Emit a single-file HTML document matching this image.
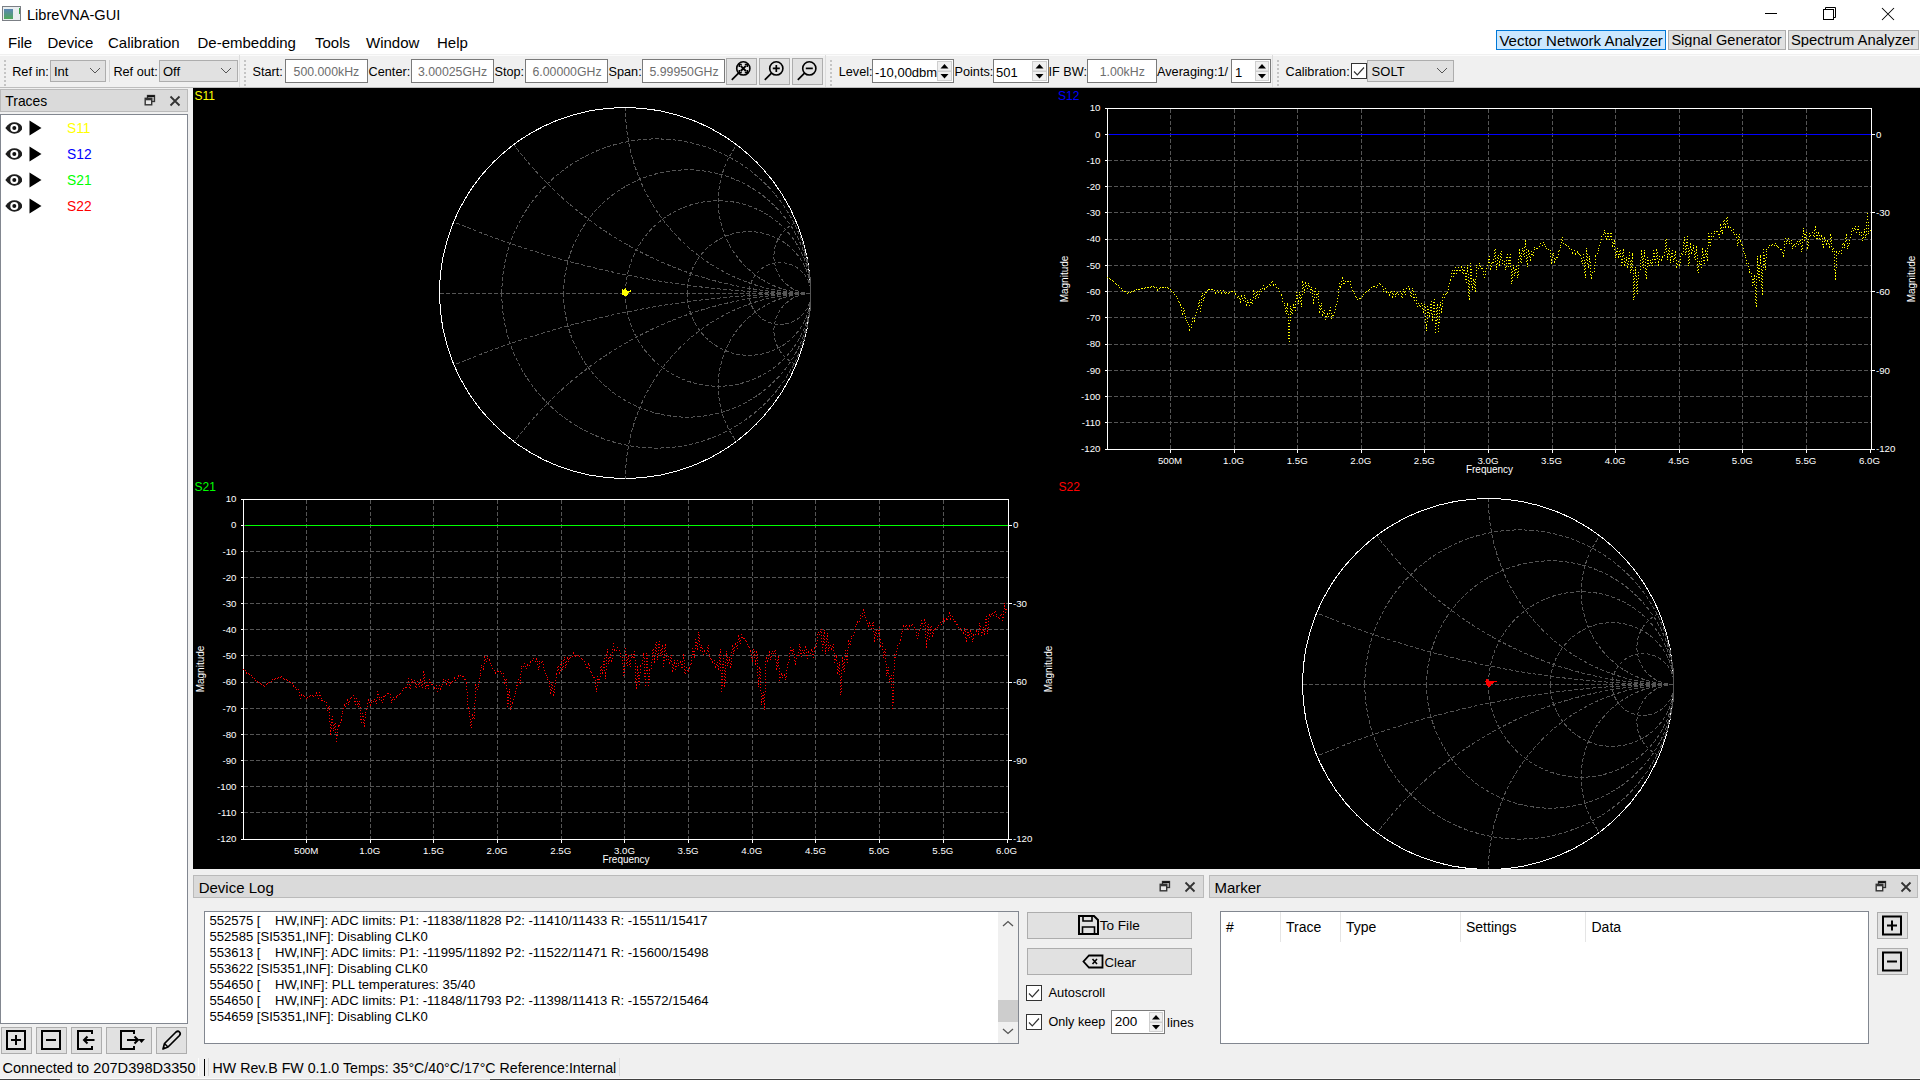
<!DOCTYPE html>
<html><head><meta charset="utf-8"><title>LibreVNA-GUI</title><style>
html,body{margin:0;padding:0;}
body{width:1920px;height:1080px;overflow:hidden;position:relative;background:#f0f0f0;font-family:"Liberation Sans", sans-serif;}
.t{position:absolute;white-space:pre;line-height:1;}
.r{position:absolute;}
</style></head>
<body>
<div class="r" style="left:0px;top:0px;width:1920px;height:54px;background:#ffffff;"></div><svg class="r" style="left:2px;top:6px" width="20" height="16"><defs><linearGradient id="ig" x1="0" y1="0" x2="0" y2="1"><stop offset="0" stop-color="#5b86b5"/><stop offset="1" stop-color="#4fa85a"/></linearGradient></defs><rect x="0.5" y="0.5" width="18" height="14" fill="#e9eef0" stroke="#7b7f85"/><rect x="2" y="3" width="9" height="10" fill="url(#ig)"/><rect x="17" y="2" width="1" height="6" fill="#3aa14a"/></svg><div class="t" style="left:27.00px;top:7.64px;font-size:14.6px;color:#000;">LibreVNA-GUI</div><div class="r" style="left:1765px;top:13px;width:12px;height:1px;background:#000;"></div><svg class="r" style="left:1820px;top:5px" width="20" height="18"><rect x="3.5" y="4.5" width="10" height="10" fill="none" stroke="#000"/><path d="M5.5,4.5 V2.5 H15.5 V12.5 H13.5" fill="none" stroke="#000"/></svg><svg class="r" style="left:1880px;top:6px" width="16" height="16"><path d="M2,2 L14,14 M14,2 L2,14" stroke="#000" stroke-width="1.05"/></svg><div class="t" style="left:8.00px;top:35.30px;font-size:15px;color:#000;">File</div><div class="t" style="left:47.50px;top:35.30px;font-size:15px;color:#000;">Device</div><div class="t" style="left:108.00px;top:35.30px;font-size:15px;color:#000;">Calibration</div><div class="t" style="left:197.50px;top:35.30px;font-size:15px;color:#000;">De-embedding</div><div class="t" style="left:315.00px;top:35.30px;font-size:15px;color:#000;">Tools</div><div class="t" style="left:366.00px;top:35.30px;font-size:15px;color:#000;">Window</div><div class="t" style="left:437.00px;top:35.30px;font-size:15px;color:#000;">Help</div><div class="r" style="left:1496px;top:30px;width:170px;height:20px;background:#cce8ff;box-sizing:border-box;border:1px solid #0078d7;"></div><div class="r" style="left:1668px;top:30px;width:118px;height:20px;background:#e1e1e1;box-sizing:border-box;border:1px solid #adadad;"></div><div class="r" style="left:1788px;top:30px;width:131px;height:20px;background:#e1e1e1;box-sizing:border-box;border:1px solid #adadad;"></div><div class="r" style="left:1496px;top:30px;width:424px;height:17px;overflow:hidden"><div class="t" style="left:3.40px;top:2.90px;font-size:15px;color:#000;">Vector Network Analyzer</div><div class="t" style="left:175.40px;top:3.24px;font-size:14.6px;color:#000;">Signal Generator</div><div class="t" style="left:295.00px;top:3.07px;font-size:14.8px;color:#000;">Spectrum Analyzer</div></div><div class="r" style="left:0px;top:55px;width:1920px;height:1px;background:#fbfbfb;"></div><div class="r" style="left:0px;top:87px;width:1920px;height:1px;background:#bdbdbd;"></div><div class="r" style="left:4px;top:59.5px;width:2px;height:2px;background:#c4c4c4"></div><div class="r" style="left:4px;top:63.5px;width:2px;height:2px;background:#c4c4c4"></div><div class="r" style="left:4px;top:67.5px;width:2px;height:2px;background:#c4c4c4"></div><div class="r" style="left:4px;top:71.5px;width:2px;height:2px;background:#c4c4c4"></div><div class="r" style="left:4px;top:75.5px;width:2px;height:2px;background:#c4c4c4"></div><div class="r" style="left:4px;top:79.5px;width:2px;height:2px;background:#c4c4c4"></div><div class="r" style="left:4px;top:83.5px;width:2px;height:2px;background:#c4c4c4"></div><div class="t" style="left:12.20px;top:66.35px;font-size:12.7px;color:#000;">Ref in:</div><div class="r" style="left:50px;top:60px;width:56px;height:22px;background:#e1e1e1;box-sizing:border-box;border:1px solid #adadad;"></div><div class="t" style="left:54.00px;top:64.90px;font-size:13px;color:#000;">Int</div><svg class="r" style="left:89px;top:67px" width="12" height="7"><path d="M1,1 L6.0,6 L11,1" fill="none" stroke="#444" stroke-width="0.9"/></svg><div class="r" style="left:109px;top:60px;width:1px;height:22px;background:#d4d4d4;"></div><div class="t" style="left:113.40px;top:66.35px;font-size:12.7px;color:#000;">Ref out:</div><div class="r" style="left:159px;top:60px;width:79px;height:22px;background:#e1e1e1;box-sizing:border-box;border:1px solid #adadad;"></div><div class="t" style="left:163.00px;top:64.90px;font-size:13px;color:#000;">Off</div><svg class="r" style="left:220px;top:67px" width="12" height="7"><path d="M1,1 L6.0,6 L11,1" fill="none" stroke="#444" stroke-width="0.9"/></svg><div class="r" style="left:239px;top:55px;width:1px;height:32px;background:#dcdcdc;"></div><div class="r" style="left:244px;top:59.5px;width:2px;height:2px;background:#c4c4c4"></div><div class="r" style="left:244px;top:63.5px;width:2px;height:2px;background:#c4c4c4"></div><div class="r" style="left:244px;top:67.5px;width:2px;height:2px;background:#c4c4c4"></div><div class="r" style="left:244px;top:71.5px;width:2px;height:2px;background:#c4c4c4"></div><div class="r" style="left:244px;top:75.5px;width:2px;height:2px;background:#c4c4c4"></div><div class="r" style="left:244px;top:79.5px;width:2px;height:2px;background:#c4c4c4"></div><div class="r" style="left:244px;top:83.5px;width:2px;height:2px;background:#c4c4c4"></div><div class="t" style="left:252.50px;top:66.35px;font-size:12.7px;color:#000;">Start:</div><div class="r" style="left:285px;top:59px;width:83px;height:24px;background:#fff;box-sizing:border-box;border:1px solid #7a7a7a;"></div><div class="t" style="left:293.60px;top:66.09px;font-size:12.3px;color:#6d6d6d;">500.000kHz</div><div class="t" style="left:368.60px;top:66.35px;font-size:12.7px;color:#000;">Center:</div><div class="r" style="left:411px;top:59px;width:83px;height:24px;background:#fff;box-sizing:border-box;border:1px solid #7a7a7a;"></div><div class="t" style="left:418.00px;top:66.09px;font-size:12.3px;color:#6d6d6d;">3.00025GHz</div><div class="t" style="left:494.50px;top:66.35px;font-size:12.7px;color:#000;">Stop:</div><div class="r" style="left:525px;top:59px;width:83px;height:24px;background:#fff;box-sizing:border-box;border:1px solid #7a7a7a;"></div><div class="t" style="left:532.50px;top:66.09px;font-size:12.3px;color:#6d6d6d;">6.00000GHz</div><div class="t" style="left:608.50px;top:66.35px;font-size:12.7px;color:#000;">Span:</div><div class="r" style="left:642px;top:59px;width:83px;height:24px;background:#fff;box-sizing:border-box;border:1px solid #7a7a7a;"></div><div class="t" style="left:649.50px;top:66.09px;font-size:12.3px;color:#6d6d6d;">5.99950GHz</div><div class="r" style="left:726px;top:58px;width:31px;height:27px;background:#e1e1e1;box-sizing:border-box;border:1px solid #adadad;"></div><svg class="r" style="left:0;top:0" width="1920" height="90"><g transform="translate(0,0)"><circle cx="743.3" cy="68.4" r="6.6" fill="none" stroke="#000" stroke-width="1.6"/><path d="M738.5,73.2 L731.8,79.9" stroke="#000" stroke-width="1.7"/><path d="M740.6999999999999,65.80000000000001 L745.9,71.0 M745.9,65.80000000000001 L740.6999999999999,71.0" stroke="#000" stroke-width="1.8"/><path d="M739.3,66.9 V64.4 H741.8 M744.8,64.4 H747.3 V66.9 M747.3,69.9 V72.4 H744.8 M741.8,72.4 H739.3 V69.9" fill="none" stroke="#000" stroke-width="1.5"/></g></svg><div class="r" style="left:759px;top:58px;width:31px;height:27px;background:#e1e1e1;box-sizing:border-box;border:1px solid #adadad;"></div><svg class="r" style="left:0;top:0" width="1920" height="90"><g transform="translate(0,0)"><circle cx="776.3" cy="68.4" r="6.6" fill="none" stroke="#000" stroke-width="1.6"/><path d="M771.5,73.2 L764.8,79.9" stroke="#000" stroke-width="1.7"/><path d="M772.8,68.4 H779.8 M776.3,64.9 V71.9" stroke="#000" stroke-width="1.7"/></g></svg><div class="r" style="left:792px;top:58px;width:31px;height:27px;background:#e1e1e1;box-sizing:border-box;border:1px solid #adadad;"></div><svg class="r" style="left:0;top:0" width="1920" height="90"><g transform="translate(0,0)"><circle cx="809.3" cy="68.4" r="6.6" fill="none" stroke="#000" stroke-width="1.6"/><path d="M804.5,73.2 L797.8,79.9" stroke="#000" stroke-width="1.7"/><path d="M805.8,68.4 H812.8" stroke="#000" stroke-width="1.7"/></g></svg><div class="r" style="left:825px;top:55px;width:1px;height:32px;background:#dcdcdc;"></div><div class="r" style="left:830px;top:59.5px;width:2px;height:2px;background:#c4c4c4"></div><div class="r" style="left:830px;top:63.5px;width:2px;height:2px;background:#c4c4c4"></div><div class="r" style="left:830px;top:67.5px;width:2px;height:2px;background:#c4c4c4"></div><div class="r" style="left:830px;top:71.5px;width:2px;height:2px;background:#c4c4c4"></div><div class="r" style="left:830px;top:75.5px;width:2px;height:2px;background:#c4c4c4"></div><div class="r" style="left:830px;top:79.5px;width:2px;height:2px;background:#c4c4c4"></div><div class="r" style="left:830px;top:83.5px;width:2px;height:2px;background:#c4c4c4"></div><div class="t" style="left:838.70px;top:66.35px;font-size:12.7px;color:#000;">Level:</div><div class="r" style="left:872px;top:59px;width:82px;height:24px;background:#fff;box-sizing:border-box;border:1px solid #7a7a7a;"></div><div class="t" style="left:875.00px;top:65.50px;font-size:13px;color:#000;">-10,00dbm</div><svg class="r" style="left:937px;top:61px" width="15" height="20"><rect x="0.5" y="0.5" width="14" height="9.5" fill="#f0f0f0" stroke="#cfcfcf"/><rect x="0.5" y="10.5" width="14" height="9.0" fill="#f0f0f0" stroke="#cfcfcf"/><path d="M3.5,7.5 L7.5,3.0 L11.5,7.5Z" fill="#000"/><path d="M3.5,13.0 L7.5,17.5 L11.5,13.0Z" fill="#000"/></svg><div class="t" style="left:954.50px;top:66.35px;font-size:12.7px;color:#000;">Points:</div><div class="r" style="left:993px;top:59px;width:56px;height:24px;background:#fff;box-sizing:border-box;border:1px solid #7a7a7a;"></div><div class="t" style="left:996.00px;top:65.50px;font-size:13px;color:#000;">501</div><svg class="r" style="left:1032px;top:61px" width="15" height="20"><rect x="0.5" y="0.5" width="14" height="9.5" fill="#f0f0f0" stroke="#cfcfcf"/><rect x="0.5" y="10.5" width="14" height="9.0" fill="#f0f0f0" stroke="#cfcfcf"/><path d="M3.5,7.5 L7.5,3.0 L11.5,7.5Z" fill="#000"/><path d="M3.5,13.0 L7.5,17.5 L11.5,13.0Z" fill="#000"/></svg><div class="t" style="left:1048.50px;top:66.35px;font-size:12.7px;color:#000;">IF BW:</div><div class="r" style="left:1087px;top:59px;width:70px;height:24px;background:#fff;box-sizing:border-box;border:1px solid #7a7a7a;"></div><div class="t" style="left:1099.70px;top:66.09px;font-size:12.3px;color:#6d6d6d;">1.00kHz</div><div class="t" style="left:1157.00px;top:66.35px;font-size:12.7px;color:#000;">Averaging:1/</div><div class="r" style="left:1231px;top:59px;width:40px;height:24px;background:#fff;box-sizing:border-box;border:1px solid #7a7a7a;"></div><div class="t" style="left:1235.00px;top:65.50px;font-size:13px;color:#000;">1</div><svg class="r" style="left:1255px;top:61px" width="14" height="20"><rect x="0.5" y="0.5" width="13" height="9.5" fill="#f0f0f0" stroke="#cfcfcf"/><rect x="0.5" y="10.5" width="13" height="9.0" fill="#f0f0f0" stroke="#cfcfcf"/><path d="M3.0,7.5 L7.0,3.0 L11.0,7.5Z" fill="#000"/><path d="M3.0,13.0 L7.0,17.5 L11.0,13.0Z" fill="#000"/></svg><div class="r" style="left:1272px;top:55px;width:1px;height:32px;background:#dcdcdc;"></div><div class="r" style="left:1277px;top:59.5px;width:2px;height:2px;background:#c4c4c4"></div><div class="r" style="left:1277px;top:63.5px;width:2px;height:2px;background:#c4c4c4"></div><div class="r" style="left:1277px;top:67.5px;width:2px;height:2px;background:#c4c4c4"></div><div class="r" style="left:1277px;top:71.5px;width:2px;height:2px;background:#c4c4c4"></div><div class="r" style="left:1277px;top:75.5px;width:2px;height:2px;background:#c4c4c4"></div><div class="r" style="left:1277px;top:79.5px;width:2px;height:2px;background:#c4c4c4"></div><div class="r" style="left:1277px;top:83.5px;width:2px;height:2px;background:#c4c4c4"></div><div class="t" style="left:1285.50px;top:66.35px;font-size:12.7px;color:#000;">Calibration:</div><svg class="r" style="left:1351px;top:63px" width="16" height="16"><rect x="0.5" y="0.5" width="15" height="15" fill="#fff" stroke="#333"/><path d="M3,8.5 L6.3,11.8 L13,4.5" fill="none" stroke="#333" stroke-width="1.2"/></svg><div class="r" style="left:1367px;top:60px;width:87px;height:22px;background:#e1e1e1;box-sizing:border-box;border:1px solid #adadad;"></div><div class="t" style="left:1371.60px;top:64.90px;font-size:13px;color:#000;">SOLT</div><svg class="r" style="left:1436px;top:67px" width="12" height="7"><path d="M1,1 L6.0,6 L11,1" fill="none" stroke="#444" stroke-width="0.9"/></svg><div class="r" style="left:0px;top:89px;width:188px;height:23px;background:#dadada;box-sizing:border-box;border:1px solid #bababa;"></div><div class="t" style="left:5.30px;top:95.03px;font-size:13.9px;color:#000;">Traces</div><svg class="r" style="left:143.5px;top:94.0px" width="12" height="12"><rect x="3.5" y="1.5" width="7" height="6" fill="#bbb" stroke="#333" stroke-width="1.3"/><rect x="1.2" y="4.3" width="6.5" height="6.5" fill="#e8e8e8" stroke="#333" stroke-width="1.4"/><path d="M1.5,5.5 H7.5" stroke="#333" stroke-width="1.6"/><path d="M3.5,2.2 H10.5" stroke="#111" stroke-width="1.6"/></svg><svg class="r" style="left:169px;top:94.5px" width="12" height="12"><path d="M1.5,1.5 L10.5,10.5 M10.5,1.5 L1.5,10.5" stroke="#333" stroke-width="1.8"/></svg><div class="r" style="left:0px;top:114px;width:188px;height:910px;background:#fff;box-sizing:border-box;border:1px solid #828790;"></div><svg class="r" style="left:5px;top:122.4px" width="18" height="12"><path d="M0.3,6 C3.5,2 6,0.3 9.3,0.3 C13,0.3 15.5,2.3 17,4.5 L17,7.5 C15.5,9.7 13,11.7 9.3,11.7 C6,11.7 3.5,10 0.3,6Z" fill="#1e1e1e"/><circle cx="9.3" cy="6" r="4" fill="#fff"/><circle cx="9.3" cy="6" r="2" fill="#111"/></svg><svg class="r" style="left:28.5px;top:120.4px" width="14" height="16"><path d="M0.5,0.5 L12.5,8 L0.5,15.5Z" fill="#000"/></svg><div class="t" style="left:67.00px;top:121.92px;font-size:13.8px;color:#ffff00;">S11</div><svg class="r" style="left:5px;top:148.4px" width="18" height="12"><path d="M0.3,6 C3.5,2 6,0.3 9.3,0.3 C13,0.3 15.5,2.3 17,4.5 L17,7.5 C15.5,9.7 13,11.7 9.3,11.7 C6,11.7 3.5,10 0.3,6Z" fill="#1e1e1e"/><circle cx="9.3" cy="6" r="4" fill="#fff"/><circle cx="9.3" cy="6" r="2" fill="#111"/></svg><svg class="r" style="left:28.5px;top:146.4px" width="14" height="16"><path d="M0.5,0.5 L12.5,8 L0.5,15.5Z" fill="#000"/></svg><div class="t" style="left:67.00px;top:147.92px;font-size:13.8px;color:#0000ff;">S12</div><svg class="r" style="left:5px;top:174.4px" width="18" height="12"><path d="M0.3,6 C3.5,2 6,0.3 9.3,0.3 C13,0.3 15.5,2.3 17,4.5 L17,7.5 C15.5,9.7 13,11.7 9.3,11.7 C6,11.7 3.5,10 0.3,6Z" fill="#1e1e1e"/><circle cx="9.3" cy="6" r="4" fill="#fff"/><circle cx="9.3" cy="6" r="2" fill="#111"/></svg><svg class="r" style="left:28.5px;top:172.4px" width="14" height="16"><path d="M0.5,0.5 L12.5,8 L0.5,15.5Z" fill="#000"/></svg><div class="t" style="left:67.00px;top:173.92px;font-size:13.8px;color:#00ff00;">S21</div><svg class="r" style="left:5px;top:200.4px" width="18" height="12"><path d="M0.3,6 C3.5,2 6,0.3 9.3,0.3 C13,0.3 15.5,2.3 17,4.5 L17,7.5 C15.5,9.7 13,11.7 9.3,11.7 C6,11.7 3.5,10 0.3,6Z" fill="#1e1e1e"/><circle cx="9.3" cy="6" r="4" fill="#fff"/><circle cx="9.3" cy="6" r="2" fill="#111"/></svg><svg class="r" style="left:28.5px;top:198.4px" width="14" height="16"><path d="M0.5,0.5 L12.5,8 L0.5,15.5Z" fill="#000"/></svg><div class="t" style="left:67.00px;top:199.92px;font-size:13.8px;color:#ff0000;">S22</div><div class="r" style="left:1px;top:1027px;width:31px;height:27px;background:#e1e1e1;box-sizing:border-box;border:1px solid #adadad;"></div><div class="r" style="left:36px;top:1027px;width:31px;height:27px;background:#e1e1e1;box-sizing:border-box;border:1px solid #adadad;"></div><div class="r" style="left:71px;top:1027px;width:31px;height:27px;background:#e1e1e1;box-sizing:border-box;border:1px solid #adadad;"></div><div class="r" style="left:106px;top:1027px;width:46px;height:27px;background:#e1e1e1;box-sizing:border-box;border:1px solid #adadad;"></div><div class="r" style="left:156px;top:1027px;width:31px;height:27px;background:#e1e1e1;box-sizing:border-box;border:1px solid #adadad;"></div><svg class="r" style="left:0;top:1020px" width="190" height="40"><rect x="7" y="11" width="18" height="18" fill="none" stroke="#000" stroke-width="2"/><path d="M11,20 H21 M16,15 V25" stroke="#000" stroke-width="2"/><rect x="42" y="11" width="18" height="18" fill="none" stroke="#000" stroke-width="2"/><path d="M46,20 H56" stroke="#000" stroke-width="2"/><path d="M92,14 V11 H78 V29 H92 V26" fill="none" stroke="#000" stroke-width="2"/><path d="M94.5,20 H84 M87.5,16.5 L84,20 L87.5,23.5" fill="none" stroke="#000" stroke-width="2"/><path d="M134,14 V11 H121 V29 H134 V26" fill="none" stroke="#000" stroke-width="2"/><path d="M127,20 H138 M134.5,16.5 L138,20 L134.5,23.5" fill="none" stroke="#000" stroke-width="2"/><path d="M138,19 H145 L141.5,23Z" fill="#000"/><path d="M163,29 L164.5,23.5 L176,12 Q178,10.5 179.5,12 Q181,13.5 179.5,15.5 L168,27Z" fill="none" stroke="#000" stroke-width="1.7" stroke-linejoin="round"/><path d="M164.5,23.5 L168,27" stroke="#000" stroke-width="1.5"/><path d="M163,29 L165.5,28.3 L163.7,26.5Z" fill="#000"/></svg><div class="r" style="left:193px;top:875px;width:1011px;height:23px;background:#dadada;box-sizing:border-box;border:1px solid #bababa;"></div><div class="t" style="left:198.70px;top:880.30px;font-size:15px;color:#000;">Device Log</div><svg class="r" style="left:1158.5px;top:880.0px" width="12" height="12"><rect x="3.5" y="1.5" width="7" height="6" fill="#bbb" stroke="#333" stroke-width="1.3"/><rect x="1.2" y="4.3" width="6.5" height="6.5" fill="#e8e8e8" stroke="#333" stroke-width="1.4"/><path d="M1.5,5.5 H7.5" stroke="#333" stroke-width="1.6"/><path d="M3.5,2.2 H10.5" stroke="#111" stroke-width="1.6"/></svg><svg class="r" style="left:1184px;top:880.5px" width="12" height="12"><path d="M1.5,1.5 L10.5,10.5 M10.5,1.5 L1.5,10.5" stroke="#333" stroke-width="1.8"/></svg><div class="r" style="left:204px;top:911px;width:815px;height:133px;background:#fff;box-sizing:border-box;border:1px solid #828790;"></div><div class="r" style="left:998px;top:912px;width:20px;height:131px;background:#f0f0f0;"></div><div class="r" style="left:998px;top:1000px;width:20px;height:22px;background:#cdcdcd;"></div><svg class="r" style="left:998px;top:912px" width="20" height="131"><path d="M5,14 L10,9.5 L15,14" fill="none" stroke="#555" stroke-width="1.3"/><path d="M5,117 L10,121.5 L15,117" fill="none" stroke="#555" stroke-width="1.3"/></svg><div class="t" style="left:209.50px;top:913.51px;font-size:13.1px;color:#000;white-space:pre;">552575 [    HW,INF]: ADC limits: P1: -11838/11828 P2: -11410/11433 R: -15511/15417</div><div class="t" style="left:209.50px;top:929.51px;font-size:13.1px;color:#000;white-space:pre;">552585 [SI5351,INF]: Disabling CLK0</div><div class="t" style="left:209.50px;top:945.51px;font-size:13.1px;color:#000;white-space:pre;">553613 [    HW,INF]: ADC limits: P1: -11995/11892 P2: -11522/11471 R: -15600/15498</div><div class="t" style="left:209.50px;top:961.51px;font-size:13.1px;color:#000;white-space:pre;">553622 [SI5351,INF]: Disabling CLK0</div><div class="t" style="left:209.50px;top:977.51px;font-size:13.1px;color:#000;white-space:pre;">554650 [    HW,INF]: PLL temperatures: 35/40</div><div class="t" style="left:209.50px;top:993.51px;font-size:13.1px;color:#000;white-space:pre;">554650 [    HW,INF]: ADC limits: P1: -11848/11793 P2: -11398/11413 R: -15572/15464</div><div class="t" style="left:209.50px;top:1009.51px;font-size:13.1px;color:#000;white-space:pre;">554659 [SI5351,INF]: Disabling CLK0</div><div class="r" style="left:1027px;top:912px;width:165px;height:27px;background:#e1e1e1;box-sizing:border-box;border:1px solid #adadad;"></div><div class="r" style="left:1027px;top:948px;width:165px;height:27px;background:#e1e1e1;box-sizing:border-box;border:1px solid #adadad;"></div><svg class="r" style="left:1070px;top:910px" width="40" height="70"><path d="M9,6 H24 L28,10 V24 H9Z" fill="none" stroke="#000" stroke-width="2"/><path d="M13,6 V11 H22 V6" fill="none" stroke="#000" stroke-width="1.6"/><path d="M12.5,24 V17 H24.5 V24" fill="none" stroke="#000" stroke-width="1.6"/><path d="M32.5,45.5 H19 L13.5,51.5 L19,57.5 H32.5Z" fill="none" stroke="#000" stroke-width="1.8" stroke-linejoin="miter"/><path d="M22.5,49 L27,54 M27,49 L22.5,54" stroke="#000" stroke-width="1.6"/></svg><div class="t" style="left:1099.70px;top:919.29px;font-size:13.6px;color:#000;">To File</div><div class="t" style="left:1104.50px;top:955.83px;font-size:13.2px;color:#000;">Clear</div><svg class="r" style="left:1026px;top:985px" width="16" height="16"><rect x="0.5" y="0.5" width="15" height="15" fill="#fff" stroke="#333"/><path d="M3,8.5 L6.3,11.8 L13,4.5" fill="none" stroke="#333" stroke-width="1.2"/></svg><div class="t" style="left:1048.50px;top:987.08px;font-size:12.9px;color:#000;">Autoscroll</div><svg class="r" style="left:1026px;top:1014px" width="16" height="16"><rect x="0.5" y="0.5" width="15" height="15" fill="#fff" stroke="#333"/><path d="M3,8.5 L6.3,11.8 L13,4.5" fill="none" stroke="#333" stroke-width="1.2"/></svg><div class="t" style="left:1048.50px;top:1016.03px;font-size:12.6px;color:#000;">Only keep</div><div class="r" style="left:1111px;top:1010px;width:54px;height:24px;background:#fff;box-sizing:border-box;border:1px solid #7a7a7a;"></div><div class="t" style="left:1114.70px;top:1015.27px;font-size:13.5px;color:#000;">200</div><svg class="r" style="left:1149px;top:1012px" width="14" height="20"><rect x="0.5" y="0.5" width="13" height="9.5" fill="#f0f0f0" stroke="#cfcfcf"/><rect x="0.5" y="10.5" width="13" height="9.0" fill="#f0f0f0" stroke="#cfcfcf"/><path d="M3.0,7.5 L7.0,3.0 L11.0,7.5Z" fill="#000"/><path d="M3.0,13.0 L7.0,17.5 L11.0,13.0Z" fill="#000"/></svg><div class="t" style="left:1167.00px;top:1015.70px;font-size:13px;color:#000;">lines</div><div class="r" style="left:1209px;top:875px;width:709px;height:23px;background:#dadada;box-sizing:border-box;border:1px solid #bababa;"></div><div class="t" style="left:1214.40px;top:880.20px;font-size:15px;color:#000;">Marker</div><svg class="r" style="left:1874.5px;top:880.0px" width="12" height="12"><rect x="3.5" y="1.5" width="7" height="6" fill="#bbb" stroke="#333" stroke-width="1.3"/><rect x="1.2" y="4.3" width="6.5" height="6.5" fill="#e8e8e8" stroke="#333" stroke-width="1.4"/><path d="M1.5,5.5 H7.5" stroke="#333" stroke-width="1.6"/><path d="M3.5,2.2 H10.5" stroke="#111" stroke-width="1.6"/></svg><svg class="r" style="left:1900px;top:880.5px" width="12" height="12"><path d="M1.5,1.5 L10.5,10.5 M10.5,1.5 L1.5,10.5" stroke="#333" stroke-width="1.8"/></svg><div class="r" style="left:1220px;top:911px;width:649px;height:133px;background:#fff;box-sizing:border-box;border:1px solid #828790;"></div><div class="r" style="left:1280px;top:912px;width:1px;height:30px;background:#e5e5e5;"></div><div class="r" style="left:1340px;top:912px;width:1px;height:30px;background:#e5e5e5;"></div><div class="r" style="left:1460px;top:912px;width:1px;height:30px;background:#e5e5e5;"></div><div class="r" style="left:1585px;top:912px;width:1px;height:30px;background:#e5e5e5;"></div><div class="t" style="left:1226.00px;top:920.25px;font-size:14px;color:#000;">#</div><div class="t" style="left:1286.00px;top:920.25px;font-size:14px;color:#000;">Trace</div><div class="t" style="left:1346.00px;top:920.25px;font-size:14px;color:#000;">Type</div><div class="t" style="left:1466.00px;top:920.25px;font-size:14px;color:#000;">Settings</div><div class="t" style="left:1591.50px;top:920.25px;font-size:14px;color:#000;">Data</div><div class="r" style="left:1877px;top:912px;width:31px;height:27px;background:#e1e1e1;box-sizing:border-box;border:1px solid #adadad;"></div><div class="r" style="left:1877px;top:948px;width:31px;height:27px;background:#e1e1e1;box-sizing:border-box;border:1px solid #adadad;"></div><svg class="r" style="left:1877px;top:912px" width="31" height="64"><rect x="6" y="4.5" width="18" height="18" fill="none" stroke="#000" stroke-width="2"/><path d="M10,13.5 H20 M15,8.5 V18.5" stroke="#000" stroke-width="2"/><rect x="6" y="40.5" width="18" height="18" fill="none" stroke="#000" stroke-width="2"/><path d="M10,49.5 H20" stroke="#000" stroke-width="2"/></svg><div class="t" style="left:2.40px;top:1060.64px;font-size:14.6px;color:#000;">Connected to 207D398D3350</div><div class="r" style="left:198px;top:1058px;width:1px;height:18px;background:#fdfdfd;"></div><div class="r" style="left:204px;top:1059px;width:1px;height:17px;background:#000;"></div><div class="r" style="left:208px;top:1058px;width:1px;height:18px;background:#dadada;"></div><div class="t" style="left:212.60px;top:1060.98px;font-size:14.2px;color:#000;">HW Rev.B FW 0.1.0 Temps: 35°C/40°C/17°C Reference:Internal</div><div class="r" style="left:619px;top:1058px;width:1px;height:18px;background:#dadada;"></div><div class="r" style="left:0px;top:1078px;width:1920px;height:1px;background:#f9f9f9;"></div><div class="r" style="left:0px;top:1079px;width:1920px;height:1px;background:#404040;"></div><div class="r" style="left:60px;top:1079px;width:430px;height:1px;background:#c8c8c8;"></div><div class="r" style="left:193px;top:88px;width:1727px;height:781px;background:#000000;"></div><svg class="r" style="left:0;top:0" width="1920" height="1080" shape-rendering="crispEdges"><defs><clipPath id="ga"><rect x="193" y="88" width="1727" height="781"/></clipPath></defs><g clip-path="url(#ga)"><circle cx="625.0" cy="293.0" r="185.5" fill="none" stroke="#ffffff" stroke-width="1"/><path d="M501.83333333333326,293.5 A154.58333333333334,154.58333333333334 0 1 0 811.0,293.5 A154.58333333333334,154.58333333333334 0 1 0 501.83333333333326,293.5 M563.6666666666667,293.5 A123.66666666666666,123.66666666666666 0 1 0 811.0,293.5 A123.66666666666666,123.66666666666666 0 1 0 563.6666666666667,293.5 M625.5,293.5 A92.75,92.75 0 1 0 811.0,293.5 A92.75,92.75 0 1 0 625.5,293.5 M687.3333333333333,293.5 A61.83333333333333,61.83333333333333 0 1 0 811.0,293.5 A61.83333333333333,61.83333333333333 0 1 0 687.3333333333333,293.5 M749.1666666666667,293.5 A30.916666666666657,30.916666666666657 0 1 0 811.0,293.5 A30.916666666666657,30.916666666666657 0 1 0 749.1666666666667,293.5 M440.0,293.5 H811.0 M811.0,293.5 A927.5,927.5 0 0 1 454.269,222.154 M811.0,293.5 A927.5,927.5 0 0 0 454.269,364.846 M811.0,293.5 A371.0,371.0 0 0 1 514.200,145.100 M811.0,293.5 A371.0,371.0 0 0 0 514.200,441.900 M811.0,293.5 A185.5,185.5 0 0 1 625.500,108.000 M811.0,293.5 A185.5,185.5 0 0 0 625.500,479.000 M811.0,293.5 A92.75,92.75 0 0 1 736.800,145.100 M811.0,293.5 A92.75,92.75 0 0 0 736.800,441.900 M811.0,293.5 A37.1,37.1 0 0 1 796.731,222.154 M811.0,293.5 A37.1,37.1 0 0 0 796.731,364.846" fill="none" stroke="#555555" stroke-width="1" stroke-dasharray="4 2"/><polygon points="622,289 623.5,290.5 625.5,288 627,290.5 629.5,291 631,290 631.5,291 629.5,292.5 628,293.5 627.5,295 625.5,296.5 623.5,295 622,294.5 622.5,292" fill="#ffff00"/><circle cx="1488.0" cy="684.0" r="185.5" fill="none" stroke="#ffffff" stroke-width="1"/><path d="M1364.8333333333335,684.5 A154.58333333333334,154.58333333333334 0 1 0 1674.0,684.5 A154.58333333333334,154.58333333333334 0 1 0 1364.8333333333335,684.5 M1426.6666666666665,684.5 A123.66666666666666,123.66666666666666 0 1 0 1674.0,684.5 A123.66666666666666,123.66666666666666 0 1 0 1426.6666666666665,684.5 M1488.5,684.5 A92.75,92.75 0 1 0 1674.0,684.5 A92.75,92.75 0 1 0 1488.5,684.5 M1550.3333333333335,684.5 A61.83333333333333,61.83333333333333 0 1 0 1674.0,684.5 A61.83333333333333,61.83333333333333 0 1 0 1550.3333333333335,684.5 M1612.1666666666665,684.5 A30.916666666666657,30.916666666666657 0 1 0 1674.0,684.5 A30.916666666666657,30.916666666666657 0 1 0 1612.1666666666665,684.5 M1303.0,684.5 H1674.0 M1674.0,684.5 A927.5,927.5 0 0 1 1317.269,613.154 M1674.0,684.5 A927.5,927.5 0 0 0 1317.269,755.846 M1674.0,684.5 A371.0,371.0 0 0 1 1377.200,536.100 M1674.0,684.5 A371.0,371.0 0 0 0 1377.200,832.900 M1674.0,684.5 A185.5,185.5 0 0 1 1488.500,499.000 M1674.0,684.5 A185.5,185.5 0 0 0 1488.500,870.000 M1674.0,684.5 A92.75,92.75 0 0 1 1599.800,536.100 M1674.0,684.5 A92.75,92.75 0 0 0 1599.800,832.900 M1674.0,684.5 A37.1,37.1 0 0 1 1659.731,613.154 M1674.0,684.5 A37.1,37.1 0 0 0 1659.731,755.846" fill="none" stroke="#555555" stroke-width="1" stroke-dasharray="4 2"/><polygon points="1486.5,678.5 1488.5,680.5 1493.5,680.5 1494,683 1491.5,684.5 1491,686 1489,687 1487,686 1485.5,684 1485.5,681.5" fill="#ff0000"/><rect x="1494" y="681" width="3" height="1" fill="#ff0000"/><path d="M1107.5,134.5 H1871.5 M1107.5,160.5 H1871.5 M1107.5,186.5 H1871.5 M1107.5,212.5 H1871.5 M1107.5,239.5 H1871.5 M1107.5,265.5 H1871.5 M1107.5,291.5 H1871.5 M1107.5,317.5 H1871.5 M1107.5,344.5 H1871.5 M1107.5,370.5 H1871.5 M1107.5,396.5 H1871.5 M1107.5,422.5 H1871.5 M1170.5,108.5 V449.5 M1234.5,108.5 V449.5 M1297.5,108.5 V449.5 M1361.5,108.5 V449.5 M1424.5,108.5 V449.5 M1488.5,108.5 V449.5 M1552.5,108.5 V449.5 M1615.5,108.5 V449.5 M1679.5,108.5 V449.5 M1742.5,108.5 V449.5 M1806.5,108.5 V449.5" fill="none" stroke="#555555" stroke-width="1" stroke-dasharray="4 2"/><path d="M1107.5,108.5 H1871.5 V449.5 H1107.5 Z M1104.5,108.5 H1107.5 M1104.5,134.5 H1107.5 M1104.5,160.5 H1107.5 M1104.5,186.5 H1107.5 M1104.5,212.5 H1107.5 M1104.5,239.5 H1107.5 M1104.5,265.5 H1107.5 M1104.5,291.5 H1107.5 M1104.5,317.5 H1107.5 M1104.5,344.5 H1107.5 M1104.5,370.5 H1107.5 M1104.5,396.5 H1107.5 M1104.5,422.5 H1107.5 M1104.5,449.5 H1107.5 M1871.5,134.5 H1874.5 M1871.5,212.5 H1874.5 M1871.5,291.5 H1874.5 M1871.5,370.5 H1874.5 M1871.5,449.5 H1874.5 M1170.5,449.5 V452.5 M1234.5,449.5 V452.5 M1297.5,449.5 V452.5 M1361.5,449.5 V452.5 M1424.5,449.5 V452.5 M1488.5,449.5 V452.5 M1552.5,449.5 V452.5 M1615.5,449.5 V452.5 M1679.5,449.5 V452.5 M1742.5,449.5 V452.5 M1806.5,449.5 V452.5 M1870.5,449.5 V452.5" fill="none" stroke="#ffffff" stroke-width="1"/><path d="M1108.5,134.5 H1871.0" stroke="#0000ff" stroke-width="1"/><path d="M1107 277h1v1h-1zM1109 278h1v1h-1zM1110 279h1v1h-1zM1112 280h1v1h-1zM1113 281h1v1h-1zM1115 283h1v1h-1zM1116 284h1v1h-1zM1118 285h1v1h-1zM1119 287h1v1h-1zM1121 288h1v1h-1zM1122 290h1v1h-1zM1124 291h1v1h-1zM1125 291h1v1h-1zM1127 293h1v1h-1zM1128 292h1v1h-1zM1130 292h1v1h-1zM1131 291h1v1h-1zM1133 291h1v1h-1zM1134 290h1v1h-1zM1136 289h1v1h-1zM1138 289h1v1h-1zM1139 289h1v1h-1zM1141 288h1v1h-1zM1142 288h1v1h-1zM1144 288h1v1h-1zM1145 287h1v1h-1zM1147 287h1v1h-1zM1148 287h1v1h-1zM1150 287h1v1h-1zM1151 286h1v1h-1zM1153 286h1v1h-1zM1154 287h1v1h-1zM1156 287h1v1h-1zM1157 289h1v1h-1zM1157 290h1v1h-1zM1159 288h1v1h-1zM1160 287h1v1h-1zM1162 287h1v1h-1zM1163 287h1v1h-1zM1165 287h1v1h-1zM1167 287h1v1h-1zM1168 288h1v1h-1zM1170 289h1v1h-1zM1171 291h1v1h-1zM1173 292h1v1h-1zM1174 294h1v1h-1zM1176 296h1v1h-1zM1177 298h1v1h-1zM1178 301h1v1h-1zM1179 302h1v1h-1zM1180 304h1v1h-1zM1180 305h1v1h-1zM1181 307h1v1h-1zM1181 310h1v1h-1zM1182 313h1v1h-1zM1182 314h1v1h-1zM1183 311h1v1h-1zM1183 308h1v1h-1zM1184 310h1v1h-1zM1184 313h1v1h-1zM1185 316h1v1h-1zM1185 318h1v1h-1zM1186 320h1v1h-1zM1187 322h1v1h-1zM1188 324h1v1h-1zM1189 326h1v1h-1zM1189 329h1v1h-1zM1189 330h1v1h-1zM1191 327h1v1h-1zM1191 324h1v1h-1zM1192 321h1v1h-1zM1192 318h1v1h-1zM1194 320h1v1h-1zM1194 321h1v1h-1zM1194 318h1v1h-1zM1195 315h1v1h-1zM1196 312h1v1h-1zM1197 309h1v1h-1zM1198 306h1v1h-1zM1198 303h1v1h-1zM1199 300h1v1h-1zM1199 302h1v1h-1zM1199 305h1v1h-1zM1200 308h1v1h-1zM1200 311h1v1h-1zM1201 305h1v1h-1zM1201 302h1v1h-1zM1201 299h1v1h-1zM1201 296h1v1h-1zM1202 293h1v1h-1zM1202 295h1v1h-1zM1203 298h1v1h-1zM1203 300h1v1h-1zM1204 297h1v1h-1zM1204 294h1v1h-1zM1205 292h1v1h-1zM1206 292h1v1h-1zM1207 290h1v1h-1zM1208 289h1v1h-1zM1209 289h1v1h-1zM1211 289h1v1h-1zM1212 289h1v1h-1zM1214 290h1v1h-1zM1215 292h1v1h-1zM1215 293h1v1h-1zM1217 290h1v1h-1zM1218 292h1v1h-1zM1220 290h1v1h-1zM1221 292h1v1h-1zM1221 293h1v1h-1zM1223 290h1v1h-1zM1224 292h1v1h-1zM1225 293h1v1h-1zM1226 292h1v1h-1zM1228 293h1v1h-1zM1229 292h1v1h-1zM1231 291h1v1h-1zM1232 291h1v1h-1zM1234 291h1v1h-1zM1235 293h1v1h-1zM1235 294h1v1h-1zM1237 297h1v1h-1zM1238 296h1v1h-1zM1239 298h1v1h-1zM1240 301h1v1h-1zM1240 302h1v1h-1zM1240 299h1v1h-1zM1241 296h1v1h-1zM1241 295h1v1h-1zM1242 298h1v1h-1zM1243 300h1v1h-1zM1244 297h1v1h-1zM1244 295h1v1h-1zM1245 298h1v1h-1zM1245 301h1v1h-1zM1246 304h1v1h-1zM1246 305h1v1h-1zM1247 302h1v1h-1zM1247 300h1v1h-1zM1248 302h1v1h-1zM1249 305h1v1h-1zM1250 302h1v1h-1zM1250 299h1v1h-1zM1251 302h1v1h-1zM1252 303h1v1h-1zM1252 300h1v1h-1zM1253 297h1v1h-1zM1253 294h1v1h-1zM1253 291h1v1h-1zM1253 290h1v1h-1zM1254 293h1v1h-1zM1255 296h1v1h-1zM1255 298h1v1h-1zM1256 295h1v1h-1zM1256 292h1v1h-1zM1257 291h1v1h-1zM1257 294h1v1h-1zM1258 297h1v1h-1zM1259 294h1v1h-1zM1259 291h1v1h-1zM1260 289h1v1h-1zM1261 291h1v1h-1zM1262 288h1v1h-1zM1263 285h1v1h-1zM1264 288h1v1h-1zM1264 289h1v1h-1zM1266 287h1v1h-1zM1267 286h1v1h-1zM1269 284h1v1h-1zM1270 285h1v1h-1zM1271 282h1v1h-1zM1272 281h1v1h-1zM1273 284h1v1h-1zM1273 285h1v1h-1zM1275 284h1v1h-1zM1276 287h1v1h-1zM1278 288h1v1h-1zM1279 291h1v1h-1zM1281 294h1v1h-1zM1281 295h1v1h-1zM1282 298h1v1h-1zM1282 301h1v1h-1zM1284 303h1v1h-1zM1284 305h1v1h-1zM1285 308h1v1h-1zM1285 311h1v1h-1zM1286 313h1v1h-1zM1286 310h1v1h-1zM1286 307h1v1h-1zM1287 304h1v1h-1zM1287 303h1v1h-1zM1287 305h1v1h-1zM1287 308h1v1h-1zM1287 311h1v1h-1zM1288 314h1v1h-1zM1288 317h1v1h-1zM1288 320h1v1h-1zM1288 323h1v1h-1zM1288 326h1v1h-1zM1288 329h1v1h-1zM1288 332h1v1h-1zM1288 335h1v1h-1zM1288 338h1v1h-1zM1289 341h1v1h-1zM1289 338h1v1h-1zM1289 335h1v1h-1zM1289 332h1v1h-1zM1289 329h1v1h-1zM1289 326h1v1h-1zM1289 323h1v1h-1zM1290 320h1v1h-1zM1290 317h1v1h-1zM1290 314h1v1h-1zM1290 311h1v1h-1zM1290 308h1v1h-1zM1290 306h1v1h-1zM1291 309h1v1h-1zM1291 312h1v1h-1zM1292 313h1v1h-1zM1292 310h1v1h-1zM1293 307h1v1h-1zM1293 305h1v1h-1zM1293 304h1v1h-1zM1294 307h1v1h-1zM1295 310h1v1h-1zM1295 307h1v1h-1zM1295 304h1v1h-1zM1295 301h1v1h-1zM1296 298h1v1h-1zM1296 295h1v1h-1zM1296 292h1v1h-1zM1297 295h1v1h-1zM1297 298h1v1h-1zM1298 301h1v1h-1zM1298 303h1v1h-1zM1298 300h1v1h-1zM1299 297h1v1h-1zM1299 294h1v1h-1zM1299 292h1v1h-1zM1300 295h1v1h-1zM1300 298h1v1h-1zM1300 301h1v1h-1zM1301 304h1v1h-1zM1301 306h1v1h-1zM1301 303h1v1h-1zM1301 300h1v1h-1zM1301 297h1v1h-1zM1302 294h1v1h-1zM1302 291h1v1h-1zM1302 288h1v1h-1zM1302 285h1v1h-1zM1302 282h1v1h-1zM1302 281h1v1h-1zM1303 284h1v1h-1zM1303 287h1v1h-1zM1304 290h1v1h-1zM1304 292h1v1h-1zM1304 289h1v1h-1zM1305 286h1v1h-1zM1305 283h1v1h-1zM1305 282h1v1h-1zM1306 285h1v1h-1zM1307 288h1v1h-1zM1308 285h1v1h-1zM1308 283h1v1h-1zM1309 286h1v1h-1zM1310 289h1v1h-1zM1310 292h1v1h-1zM1311 289h1v1h-1zM1311 287h1v1h-1zM1312 290h1v1h-1zM1312 293h1v1h-1zM1312 296h1v1h-1zM1313 299h1v1h-1zM1313 302h1v1h-1zM1313 303h1v1h-1zM1313 300h1v1h-1zM1314 297h1v1h-1zM1314 294h1v1h-1zM1314 291h1v1h-1zM1315 288h1v1h-1zM1315 291h1v1h-1zM1316 294h1v1h-1zM1316 297h1v1h-1zM1317 294h1v1h-1zM1318 291h1v1h-1zM1318 293h1v1h-1zM1318 296h1v1h-1zM1318 299h1v1h-1zM1318 302h1v1h-1zM1319 305h1v1h-1zM1319 308h1v1h-1zM1319 311h1v1h-1zM1319 312h1v1h-1zM1320 309h1v1h-1zM1320 306h1v1h-1zM1321 303h1v1h-1zM1321 305h1v1h-1zM1321 308h1v1h-1zM1322 311h1v1h-1zM1322 314h1v1h-1zM1322 315h1v1h-1zM1323 312h1v1h-1zM1324 310h1v1h-1zM1324 313h1v1h-1zM1325 316h1v1h-1zM1325 319h1v1h-1zM1326 316h1v1h-1zM1327 314h1v1h-1zM1327 313h1v1h-1zM1328 316h1v1h-1zM1329 313h1v1h-1zM1329 310h1v1h-1zM1330 307h1v1h-1zM1330 310h1v1h-1zM1331 313h1v1h-1zM1331 316h1v1h-1zM1331 318h1v1h-1zM1332 315h1v1h-1zM1333 315h1v1h-1zM1334 312h1v1h-1zM1335 309h1v1h-1zM1335 306h1v1h-1zM1336 304h1v1h-1zM1337 301h1v1h-1zM1337 298h1v1h-1zM1338 295h1v1h-1zM1338 292h1v1h-1zM1338 289h1v1h-1zM1339 286h1v1h-1zM1339 283h1v1h-1zM1340 286h1v1h-1zM1340 287h1v1h-1zM1341 284h1v1h-1zM1341 281h1v1h-1zM1342 278h1v1h-1zM1342 277h1v1h-1zM1343 280h1v1h-1zM1343 283h1v1h-1zM1344 283h1v1h-1zM1345 281h1v1h-1zM1347 281h1v1h-1zM1348 281h1v1h-1zM1350 281h1v1h-1zM1350 284h1v1h-1zM1351 287h1v1h-1zM1352 290h1v1h-1zM1353 291h1v1h-1zM1354 293h1v1h-1zM1355 296h1v1h-1zM1356 297h1v1h-1zM1357 299h1v1h-1zM1359 298h1v1h-1zM1360 298h1v1h-1zM1362 296h1v1h-1zM1363 294h1v1h-1zM1365 292h1v1h-1zM1366 291h1v1h-1zM1368 290h1v1h-1zM1369 289h1v1h-1zM1371 287h1v1h-1zM1373 286h1v1h-1zM1374 286h1v1h-1zM1376 287h1v1h-1zM1377 285h1v1h-1zM1379 283h1v1h-1zM1380 284h1v1h-1zM1382 286h1v1h-1zM1383 289h1v1h-1zM1383 291h1v1h-1zM1385 288h1v1h-1zM1386 291h1v1h-1zM1386 292h1v1h-1zM1388 292h1v1h-1zM1389 294h1v1h-1zM1389 295h1v1h-1zM1390 292h1v1h-1zM1391 291h1v1h-1zM1392 293h1v1h-1zM1392 296h1v1h-1zM1392 297h1v1h-1zM1393 294h1v1h-1zM1394 291h1v1h-1zM1395 294h1v1h-1zM1395 296h1v1h-1zM1396 293h1v1h-1zM1397 292h1v1h-1zM1398 294h1v1h-1zM1400 291h1v1h-1zM1401 293h1v1h-1zM1401 296h1v1h-1zM1402 297h1v1h-1zM1402 294h1v1h-1zM1403 291h1v1h-1zM1403 289h1v1h-1zM1404 292h1v1h-1zM1405 294h1v1h-1zM1405 291h1v1h-1zM1406 288h1v1h-1zM1408 286h1v1h-1zM1409 288h1v1h-1zM1409 289h1v1h-1zM1410 292h1v1h-1zM1410 295h1v1h-1zM1411 296h1v1h-1zM1411 293h1v1h-1zM1412 290h1v1h-1zM1412 288h1v1h-1zM1413 291h1v1h-1zM1413 294h1v1h-1zM1413 297h1v1h-1zM1414 300h1v1h-1zM1414 297h1v1h-1zM1415 294h1v1h-1zM1416 297h1v1h-1zM1416 300h1v1h-1zM1416 303h1v1h-1zM1417 306h1v1h-1zM1418 303h1v1h-1zM1419 305h1v1h-1zM1420 306h1v1h-1zM1421 303h1v1h-1zM1422 305h1v1h-1zM1422 308h1v1h-1zM1423 311h1v1h-1zM1423 312h1v1h-1zM1423 309h1v1h-1zM1424 306h1v1h-1zM1424 304h1v1h-1zM1425 307h1v1h-1zM1425 310h1v1h-1zM1425 313h1v1h-1zM1425 316h1v1h-1zM1425 319h1v1h-1zM1425 322h1v1h-1zM1426 325h1v1h-1zM1426 328h1v1h-1zM1426 330h1v1h-1zM1426 327h1v1h-1zM1426 324h1v1h-1zM1427 321h1v1h-1zM1427 318h1v1h-1zM1427 315h1v1h-1zM1427 312h1v1h-1zM1427 309h1v1h-1zM1427 306h1v1h-1zM1428 309h1v1h-1zM1428 312h1v1h-1zM1429 315h1v1h-1zM1429 316h1v1h-1zM1429 313h1v1h-1zM1430 310h1v1h-1zM1430 307h1v1h-1zM1430 304h1v1h-1zM1431 301h1v1h-1zM1431 304h1v1h-1zM1431 307h1v1h-1zM1431 310h1v1h-1zM1431 313h1v1h-1zM1432 316h1v1h-1zM1432 319h1v1h-1zM1432 320h1v1h-1zM1432 317h1v1h-1zM1432 314h1v1h-1zM1433 311h1v1h-1zM1433 308h1v1h-1zM1433 305h1v1h-1zM1433 302h1v1h-1zM1434 299h1v1h-1zM1434 302h1v1h-1zM1434 305h1v1h-1zM1434 308h1v1h-1zM1434 311h1v1h-1zM1434 314h1v1h-1zM1434 317h1v1h-1zM1435 320h1v1h-1zM1435 323h1v1h-1zM1435 326h1v1h-1zM1435 329h1v1h-1zM1435 332h1v1h-1zM1436 323h1v1h-1zM1436 320h1v1h-1zM1436 317h1v1h-1zM1436 314h1v1h-1zM1436 311h1v1h-1zM1436 308h1v1h-1zM1437 305h1v1h-1zM1437 304h1v1h-1zM1437 307h1v1h-1zM1437 310h1v1h-1zM1437 313h1v1h-1zM1437 316h1v1h-1zM1437 319h1v1h-1zM1438 322h1v1h-1zM1438 325h1v1h-1zM1438 328h1v1h-1zM1438 331h1v1h-1zM1439 322h1v1h-1zM1439 319h1v1h-1zM1439 316h1v1h-1zM1439 313h1v1h-1zM1439 310h1v1h-1zM1439 307h1v1h-1zM1440 304h1v1h-1zM1440 302h1v1h-1zM1440 305h1v1h-1zM1441 308h1v1h-1zM1441 311h1v1h-1zM1441 312h1v1h-1zM1441 309h1v1h-1zM1442 306h1v1h-1zM1442 303h1v1h-1zM1442 300h1v1h-1zM1442 297h1v1h-1zM1443 294h1v1h-1zM1444 297h1v1h-1zM1445 294h1v1h-1zM1446 293h1v1h-1zM1447 292h1v1h-1zM1448 289h1v1h-1zM1448 286h1v1h-1zM1449 283h1v1h-1zM1450 280h1v1h-1zM1450 279h1v1h-1zM1451 276h1v1h-1zM1451 273h1v1h-1zM1452 270h1v1h-1zM1453 273h1v1h-1zM1453 276h1v1h-1zM1454 273h1v1h-1zM1454 270h1v1h-1zM1455 267h1v1h-1zM1456 270h1v1h-1zM1456 273h1v1h-1zM1457 270h1v1h-1zM1458 267h1v1h-1zM1459 270h1v1h-1zM1460 270h1v1h-1zM1461 267h1v1h-1zM1461 266h1v1h-1zM1462 269h1v1h-1zM1462 272h1v1h-1zM1463 273h1v1h-1zM1463 270h1v1h-1zM1464 267h1v1h-1zM1464 270h1v1h-1zM1465 273h1v1h-1zM1465 276h1v1h-1zM1465 279h1v1h-1zM1466 282h1v1h-1zM1466 279h1v1h-1zM1466 276h1v1h-1zM1466 273h1v1h-1zM1467 270h1v1h-1zM1467 267h1v1h-1zM1467 265h1v1h-1zM1467 268h1v1h-1zM1467 271h1v1h-1zM1468 274h1v1h-1zM1468 277h1v1h-1zM1468 280h1v1h-1zM1468 283h1v1h-1zM1468 286h1v1h-1zM1468 289h1v1h-1zM1468 292h1v1h-1zM1468 295h1v1h-1zM1469 298h1v1h-1zM1469 299h1v1h-1zM1469 296h1v1h-1zM1469 293h1v1h-1zM1469 290h1v1h-1zM1469 287h1v1h-1zM1469 284h1v1h-1zM1469 281h1v1h-1zM1470 278h1v1h-1zM1470 275h1v1h-1zM1470 272h1v1h-1zM1470 269h1v1h-1zM1470 266h1v1h-1zM1470 263h1v1h-1zM1471 269h1v1h-1zM1471 272h1v1h-1zM1471 275h1v1h-1zM1471 278h1v1h-1zM1471 281h1v1h-1zM1471 284h1v1h-1zM1472 287h1v1h-1zM1472 289h1v1h-1zM1472 286h1v1h-1zM1473 283h1v1h-1zM1473 280h1v1h-1zM1473 279h1v1h-1zM1474 281h1v1h-1zM1474 284h1v1h-1zM1474 287h1v1h-1zM1475 290h1v1h-1zM1475 291h1v1h-1zM1475 288h1v1h-1zM1475 285h1v1h-1zM1475 282h1v1h-1zM1475 279h1v1h-1zM1476 276h1v1h-1zM1476 273h1v1h-1zM1476 270h1v1h-1zM1476 267h1v1h-1zM1476 265h1v1h-1zM1478 268h1v1h-1zM1479 265h1v1h-1zM1479 263h1v1h-1zM1480 266h1v1h-1zM1481 268h1v1h-1zM1482 268h1v1h-1zM1483 271h1v1h-1zM1483 274h1v1h-1zM1484 277h1v1h-1zM1485 274h1v1h-1zM1485 271h1v1h-1zM1486 268h1v1h-1zM1487 265h1v1h-1zM1488 262h1v1h-1zM1488 259h1v1h-1zM1489 256h1v1h-1zM1489 259h1v1h-1zM1489 262h1v1h-1zM1490 265h1v1h-1zM1490 268h1v1h-1zM1490 269h1v1h-1zM1491 266h1v1h-1zM1491 263h1v1h-1zM1492 262h1v1h-1zM1493 262h1v1h-1zM1493 259h1v1h-1zM1494 256h1v1h-1zM1494 253h1v1h-1zM1494 250h1v1h-1zM1495 249h1v1h-1zM1495 252h1v1h-1zM1495 255h1v1h-1zM1495 258h1v1h-1zM1495 261h1v1h-1zM1496 264h1v1h-1zM1496 267h1v1h-1zM1496 269h1v1h-1zM1496 266h1v1h-1zM1497 263h1v1h-1zM1497 260h1v1h-1zM1497 257h1v1h-1zM1498 255h1v1h-1zM1498 258h1v1h-1zM1499 261h1v1h-1zM1499 264h1v1h-1zM1499 265h1v1h-1zM1499 262h1v1h-1zM1500 259h1v1h-1zM1500 256h1v1h-1zM1500 253h1v1h-1zM1501 251h1v1h-1zM1501 254h1v1h-1zM1501 257h1v1h-1zM1502 260h1v1h-1zM1502 263h1v1h-1zM1504 261h1v1h-1zM1504 264h1v1h-1zM1505 267h1v1h-1zM1505 269h1v1h-1zM1506 266h1v1h-1zM1506 263h1v1h-1zM1506 260h1v1h-1zM1506 257h1v1h-1zM1507 254h1v1h-1zM1507 257h1v1h-1zM1508 260h1v1h-1zM1508 263h1v1h-1zM1508 266h1v1h-1zM1509 263h1v1h-1zM1509 260h1v1h-1zM1509 257h1v1h-1zM1510 254h1v1h-1zM1510 257h1v1h-1zM1510 260h1v1h-1zM1510 263h1v1h-1zM1510 266h1v1h-1zM1511 269h1v1h-1zM1511 272h1v1h-1zM1511 275h1v1h-1zM1511 278h1v1h-1zM1511 281h1v1h-1zM1511 283h1v1h-1zM1512 280h1v1h-1zM1512 277h1v1h-1zM1512 274h1v1h-1zM1512 271h1v1h-1zM1513 268h1v1h-1zM1513 265h1v1h-1zM1513 267h1v1h-1zM1514 270h1v1h-1zM1514 273h1v1h-1zM1514 275h1v1h-1zM1515 272h1v1h-1zM1515 269h1v1h-1zM1516 266h1v1h-1zM1516 269h1v1h-1zM1517 272h1v1h-1zM1517 275h1v1h-1zM1517 277h1v1h-1zM1518 274h1v1h-1zM1518 271h1v1h-1zM1518 268h1v1h-1zM1518 265h1v1h-1zM1518 262h1v1h-1zM1518 259h1v1h-1zM1519 256h1v1h-1zM1519 253h1v1h-1zM1519 250h1v1h-1zM1519 249h1v1h-1zM1519 252h1v1h-1zM1520 255h1v1h-1zM1520 258h1v1h-1zM1520 261h1v1h-1zM1521 262h1v1h-1zM1521 259h1v1h-1zM1521 256h1v1h-1zM1521 253h1v1h-1zM1522 250h1v1h-1zM1522 248h1v1h-1zM1523 251h1v1h-1zM1523 254h1v1h-1zM1524 256h1v1h-1zM1524 253h1v1h-1zM1524 250h1v1h-1zM1524 247h1v1h-1zM1525 244h1v1h-1zM1525 241h1v1h-1zM1525 240h1v1h-1zM1525 243h1v1h-1zM1525 246h1v1h-1zM1526 249h1v1h-1zM1526 252h1v1h-1zM1526 255h1v1h-1zM1526 258h1v1h-1zM1526 261h1v1h-1zM1527 264h1v1h-1zM1527 266h1v1h-1zM1527 263h1v1h-1zM1527 260h1v1h-1zM1527 257h1v1h-1zM1528 254h1v1h-1zM1528 251h1v1h-1zM1528 250h1v1h-1zM1529 253h1v1h-1zM1529 256h1v1h-1zM1530 259h1v1h-1zM1530 260h1v1h-1zM1530 257h1v1h-1zM1531 254h1v1h-1zM1531 251h1v1h-1zM1532 254h1v1h-1zM1533 255h1v1h-1zM1533 252h1v1h-1zM1534 249h1v1h-1zM1534 247h1v1h-1zM1536 248h1v1h-1zM1537 248h1v1h-1zM1539 246h1v1h-1zM1540 243h1v1h-1zM1542 245h1v1h-1zM1543 242h1v1h-1zM1544 244h1v1h-1zM1545 246h1v1h-1zM1546 248h1v1h-1zM1548 249h1v1h-1zM1550 250h1v1h-1zM1550 253h1v1h-1zM1550 256h1v1h-1zM1551 259h1v1h-1zM1551 262h1v1h-1zM1551 263h1v1h-1zM1551 260h1v1h-1zM1552 257h1v1h-1zM1552 254h1v1h-1zM1553 253h1v1h-1zM1553 255h1v1h-1zM1554 258h1v1h-1zM1554 261h1v1h-1zM1554 262h1v1h-1zM1555 259h1v1h-1zM1556 257h1v1h-1zM1557 257h1v1h-1zM1558 254h1v1h-1zM1558 251h1v1h-1zM1559 250h1v1h-1zM1560 247h1v1h-1zM1560 245h1v1h-1zM1561 242h1v1h-1zM1561 239h1v1h-1zM1562 237h1v1h-1zM1562 240h1v1h-1zM1563 243h1v1h-1zM1565 244h1v1h-1zM1566 245h1v1h-1zM1568 246h1v1h-1zM1569 248h1v1h-1zM1571 249h1v1h-1zM1572 252h1v1h-1zM1572 253h1v1h-1zM1574 250h1v1h-1zM1575 253h1v1h-1zM1575 254h1v1h-1zM1577 252h1v1h-1zM1577 251h1v1h-1zM1578 253h1v1h-1zM1579 254h1v1h-1zM1580 255h1v1h-1zM1581 258h1v1h-1zM1581 261h1v1h-1zM1582 263h1v1h-1zM1582 260h1v1h-1zM1583 257h1v1h-1zM1583 254h1v1h-1zM1584 260h1v1h-1zM1584 263h1v1h-1zM1584 266h1v1h-1zM1584 269h1v1h-1zM1584 272h1v1h-1zM1585 275h1v1h-1zM1585 277h1v1h-1zM1585 274h1v1h-1zM1585 271h1v1h-1zM1585 268h1v1h-1zM1585 265h1v1h-1zM1585 262h1v1h-1zM1586 259h1v1h-1zM1586 256h1v1h-1zM1586 253h1v1h-1zM1586 250h1v1h-1zM1586 248h1v1h-1zM1586 251h1v1h-1zM1587 254h1v1h-1zM1587 257h1v1h-1zM1587 260h1v1h-1zM1587 263h1v1h-1zM1588 266h1v1h-1zM1588 267h1v1h-1zM1588 264h1v1h-1zM1589 261h1v1h-1zM1589 258h1v1h-1zM1589 256h1v1h-1zM1589 259h1v1h-1zM1590 262h1v1h-1zM1590 265h1v1h-1zM1590 268h1v1h-1zM1590 271h1v1h-1zM1590 274h1v1h-1zM1591 277h1v1h-1zM1591 278h1v1h-1zM1591 275h1v1h-1zM1592 272h1v1h-1zM1594 271h1v1h-1zM1594 268h1v1h-1zM1594 265h1v1h-1zM1595 262h1v1h-1zM1595 259h1v1h-1zM1595 256h1v1h-1zM1595 255h1v1h-1zM1597 253h1v1h-1zM1598 250h1v1h-1zM1598 248h1v1h-1zM1599 245h1v1h-1zM1600 242h1v1h-1zM1601 239h1v1h-1zM1601 236h1v1h-1zM1603 234h1v1h-1zM1604 232h1v1h-1zM1604 230h1v1h-1zM1605 233h1v1h-1zM1605 236h1v1h-1zM1606 238h1v1h-1zM1606 239h1v1h-1zM1607 236h1v1h-1zM1607 233h1v1h-1zM1608 233h1v1h-1zM1608 236h1v1h-1zM1609 239h1v1h-1zM1610 236h1v1h-1zM1610 233h1v1h-1zM1611 233h1v1h-1zM1611 236h1v1h-1zM1611 239h1v1h-1zM1612 242h1v1h-1zM1612 245h1v1h-1zM1612 246h1v1h-1zM1613 243h1v1h-1zM1614 241h1v1h-1zM1614 240h1v1h-1zM1614 243h1v1h-1zM1614 246h1v1h-1zM1614 249h1v1h-1zM1615 252h1v1h-1zM1615 255h1v1h-1zM1615 257h1v1h-1zM1616 254h1v1h-1zM1616 251h1v1h-1zM1617 248h1v1h-1zM1617 251h1v1h-1zM1618 254h1v1h-1zM1618 256h1v1h-1zM1618 257h1v1h-1zM1619 254h1v1h-1zM1619 251h1v1h-1zM1620 250h1v1h-1zM1620 253h1v1h-1zM1620 256h1v1h-1zM1621 259h1v1h-1zM1621 262h1v1h-1zM1621 265h1v1h-1zM1622 262h1v1h-1zM1622 259h1v1h-1zM1622 256h1v1h-1zM1622 253h1v1h-1zM1623 250h1v1h-1zM1623 249h1v1h-1zM1623 252h1v1h-1zM1623 255h1v1h-1zM1624 258h1v1h-1zM1624 261h1v1h-1zM1624 264h1v1h-1zM1624 265h1v1h-1zM1625 262h1v1h-1zM1626 259h1v1h-1zM1626 257h1v1h-1zM1626 260h1v1h-1zM1627 263h1v1h-1zM1627 266h1v1h-1zM1627 267h1v1h-1zM1628 264h1v1h-1zM1628 261h1v1h-1zM1628 258h1v1h-1zM1629 255h1v1h-1zM1629 252h1v1h-1zM1629 258h1v1h-1zM1630 261h1v1h-1zM1630 264h1v1h-1zM1630 267h1v1h-1zM1630 270h1v1h-1zM1630 272h1v1h-1zM1631 269h1v1h-1zM1631 266h1v1h-1zM1631 263h1v1h-1zM1631 260h1v1h-1zM1632 257h1v1h-1zM1632 254h1v1h-1zM1632 253h1v1h-1zM1632 255h1v1h-1zM1632 258h1v1h-1zM1632 261h1v1h-1zM1632 264h1v1h-1zM1632 267h1v1h-1zM1633 270h1v1h-1zM1633 273h1v1h-1zM1633 276h1v1h-1zM1633 279h1v1h-1zM1633 282h1v1h-1zM1633 285h1v1h-1zM1633 288h1v1h-1zM1633 291h1v1h-1zM1633 294h1v1h-1zM1633 297h1v1h-1zM1633 299h1v1h-1zM1634 296h1v1h-1zM1634 293h1v1h-1zM1634 290h1v1h-1zM1634 287h1v1h-1zM1634 284h1v1h-1zM1634 281h1v1h-1zM1634 278h1v1h-1zM1635 275h1v1h-1zM1635 272h1v1h-1zM1635 269h1v1h-1zM1635 267h1v1h-1zM1635 270h1v1h-1zM1635 273h1v1h-1zM1636 276h1v1h-1zM1636 279h1v1h-1zM1636 282h1v1h-1zM1636 285h1v1h-1zM1636 288h1v1h-1zM1636 291h1v1h-1zM1637 293h1v1h-1zM1637 290h1v1h-1zM1637 287h1v1h-1zM1637 284h1v1h-1zM1637 281h1v1h-1zM1638 278h1v1h-1zM1638 275h1v1h-1zM1638 272h1v1h-1zM1640 269h1v1h-1zM1640 266h1v1h-1zM1640 263h1v1h-1zM1640 260h1v1h-1zM1641 257h1v1h-1zM1641 254h1v1h-1zM1641 251h1v1h-1zM1641 250h1v1h-1zM1641 253h1v1h-1zM1642 256h1v1h-1zM1642 259h1v1h-1zM1642 262h1v1h-1zM1642 265h1v1h-1zM1643 267h1v1h-1zM1643 264h1v1h-1zM1643 261h1v1h-1zM1643 258h1v1h-1zM1644 255h1v1h-1zM1644 252h1v1h-1zM1644 250h1v1h-1zM1644 253h1v1h-1zM1644 256h1v1h-1zM1645 259h1v1h-1zM1645 262h1v1h-1zM1645 265h1v1h-1zM1645 268h1v1h-1zM1645 271h1v1h-1zM1645 274h1v1h-1zM1646 277h1v1h-1zM1646 278h1v1h-1zM1646 275h1v1h-1zM1646 272h1v1h-1zM1646 269h1v1h-1zM1647 266h1v1h-1zM1647 263h1v1h-1zM1647 260h1v1h-1zM1647 257h1v1h-1zM1648 260h1v1h-1zM1648 263h1v1h-1zM1649 265h1v1h-1zM1650 262h1v1h-1zM1650 260h1v1h-1zM1651 263h1v1h-1zM1652 265h1v1h-1zM1652 262h1v1h-1zM1652 259h1v1h-1zM1653 256h1v1h-1zM1653 253h1v1h-1zM1653 250h1v1h-1zM1654 253h1v1h-1zM1654 256h1v1h-1zM1654 259h1v1h-1zM1655 262h1v1h-1zM1655 259h1v1h-1zM1656 256h1v1h-1zM1656 253h1v1h-1zM1656 250h1v1h-1zM1656 249h1v1h-1zM1657 252h1v1h-1zM1657 255h1v1h-1zM1657 258h1v1h-1zM1658 261h1v1h-1zM1658 264h1v1h-1zM1658 265h1v1h-1zM1658 262h1v1h-1zM1659 259h1v1h-1zM1659 256h1v1h-1zM1661 259h1v1h-1zM1661 260h1v1h-1zM1662 257h1v1h-1zM1662 256h1v1h-1zM1664 255h1v1h-1zM1664 252h1v1h-1zM1665 249h1v1h-1zM1665 246h1v1h-1zM1665 243h1v1h-1zM1665 240h1v1h-1zM1666 239h1v1h-1zM1666 242h1v1h-1zM1666 245h1v1h-1zM1666 248h1v1h-1zM1666 251h1v1h-1zM1667 254h1v1h-1zM1667 257h1v1h-1zM1667 259h1v1h-1zM1667 256h1v1h-1zM1668 253h1v1h-1zM1668 250h1v1h-1zM1669 248h1v1h-1zM1669 251h1v1h-1zM1669 254h1v1h-1zM1670 257h1v1h-1zM1670 260h1v1h-1zM1670 262h1v1h-1zM1670 259h1v1h-1zM1671 256h1v1h-1zM1671 253h1v1h-1zM1672 250h1v1h-1zM1672 253h1v1h-1zM1672 256h1v1h-1zM1673 259h1v1h-1zM1673 261h1v1h-1zM1674 258h1v1h-1zM1674 255h1v1h-1zM1675 252h1v1h-1zM1675 251h1v1h-1zM1675 254h1v1h-1zM1675 257h1v1h-1zM1676 260h1v1h-1zM1676 263h1v1h-1zM1676 266h1v1h-1zM1676 267h1v1h-1zM1677 264h1v1h-1zM1678 261h1v1h-1zM1679 264h1v1h-1zM1679 265h1v1h-1zM1680 262h1v1h-1zM1680 259h1v1h-1zM1680 256h1v1h-1zM1681 253h1v1h-1zM1682 254h1v1h-1zM1683 251h1v1h-1zM1683 248h1v1h-1zM1683 245h1v1h-1zM1683 242h1v1h-1zM1684 239h1v1h-1zM1684 237h1v1h-1zM1684 240h1v1h-1zM1684 243h1v1h-1zM1685 246h1v1h-1zM1685 249h1v1h-1zM1685 252h1v1h-1zM1685 254h1v1h-1zM1686 251h1v1h-1zM1686 248h1v1h-1zM1686 245h1v1h-1zM1686 242h1v1h-1zM1687 239h1v1h-1zM1687 236h1v1h-1zM1687 242h1v1h-1zM1687 245h1v1h-1zM1688 248h1v1h-1zM1688 251h1v1h-1zM1688 254h1v1h-1zM1688 257h1v1h-1zM1688 260h1v1h-1zM1688 263h1v1h-1zM1688 265h1v1h-1zM1689 262h1v1h-1zM1689 259h1v1h-1zM1689 256h1v1h-1zM1689 253h1v1h-1zM1689 250h1v1h-1zM1690 247h1v1h-1zM1690 244h1v1h-1zM1690 243h1v1h-1zM1690 246h1v1h-1zM1691 249h1v1h-1zM1691 252h1v1h-1zM1691 253h1v1h-1zM1692 250h1v1h-1zM1693 247h1v1h-1zM1693 245h1v1h-1zM1693 248h1v1h-1zM1694 251h1v1h-1zM1694 254h1v1h-1zM1694 257h1v1h-1zM1695 259h1v1h-1zM1695 256h1v1h-1zM1695 253h1v1h-1zM1696 250h1v1h-1zM1696 247h1v1h-1zM1696 246h1v1h-1zM1696 249h1v1h-1zM1696 252h1v1h-1zM1697 255h1v1h-1zM1697 258h1v1h-1zM1697 261h1v1h-1zM1697 264h1v1h-1zM1697 267h1v1h-1zM1697 270h1v1h-1zM1698 272h1v1h-1zM1698 269h1v1h-1zM1698 266h1v1h-1zM1699 263h1v1h-1zM1699 261h1v1h-1zM1700 264h1v1h-1zM1701 267h1v1h-1zM1701 264h1v1h-1zM1701 261h1v1h-1zM1701 258h1v1h-1zM1702 255h1v1h-1zM1702 252h1v1h-1zM1702 249h1v1h-1zM1702 248h1v1h-1zM1702 251h1v1h-1zM1703 254h1v1h-1zM1703 257h1v1h-1zM1703 260h1v1h-1zM1704 263h1v1h-1zM1704 260h1v1h-1zM1704 257h1v1h-1zM1705 254h1v1h-1zM1705 251h1v1h-1zM1705 250h1v1h-1zM1706 253h1v1h-1zM1706 256h1v1h-1zM1707 259h1v1h-1zM1707 260h1v1h-1zM1707 257h1v1h-1zM1707 254h1v1h-1zM1707 251h1v1h-1zM1707 248h1v1h-1zM1708 245h1v1h-1zM1708 242h1v1h-1zM1708 239h1v1h-1zM1708 236h1v1h-1zM1708 233h1v1h-1zM1709 236h1v1h-1zM1709 239h1v1h-1zM1709 242h1v1h-1zM1710 245h1v1h-1zM1710 242h1v1h-1zM1711 239h1v1h-1zM1711 236h1v1h-1zM1711 233h1v1h-1zM1713 236h1v1h-1zM1714 233h1v1h-1zM1714 231h1v1h-1zM1716 231h1v1h-1zM1717 231h1v1h-1zM1718 234h1v1h-1zM1719 237h1v1h-1zM1719 234h1v1h-1zM1720 231h1v1h-1zM1720 228h1v1h-1zM1720 225h1v1h-1zM1720 224h1v1h-1zM1721 227h1v1h-1zM1721 230h1v1h-1zM1722 232h1v1h-1zM1722 233h1v1h-1zM1722 230h1v1h-1zM1723 227h1v1h-1zM1723 224h1v1h-1zM1723 221h1v1h-1zM1724 220h1v1h-1zM1724 223h1v1h-1zM1725 226h1v1h-1zM1725 227h1v1h-1zM1725 224h1v1h-1zM1726 221h1v1h-1zM1726 218h1v1h-1zM1727 217h1v1h-1zM1727 220h1v1h-1zM1727 223h1v1h-1zM1728 226h1v1h-1zM1728 227h1v1h-1zM1730 227h1v1h-1zM1731 230h1v1h-1zM1733 229h1v1h-1zM1733 232h1v1h-1zM1734 234h1v1h-1zM1736 234h1v1h-1zM1736 237h1v1h-1zM1737 240h1v1h-1zM1737 243h1v1h-1zM1737 245h1v1h-1zM1738 242h1v1h-1zM1738 239h1v1h-1zM1738 236h1v1h-1zM1739 234h1v1h-1zM1739 237h1v1h-1zM1740 240h1v1h-1zM1740 241h1v1h-1zM1741 244h1v1h-1zM1742 245h1v1h-1zM1743 248h1v1h-1zM1743 251h1v1h-1zM1744 253h1v1h-1zM1745 255h1v1h-1zM1745 257h1v1h-1zM1746 260h1v1h-1zM1746 263h1v1h-1zM1748 263h1v1h-1zM1748 266h1v1h-1zM1749 269h1v1h-1zM1749 271h1v1h-1zM1749 272h1v1h-1zM1751 273h1v1h-1zM1751 276h1v1h-1zM1752 279h1v1h-1zM1752 282h1v1h-1zM1752 285h1v1h-1zM1753 282h1v1h-1zM1753 279h1v1h-1zM1754 276h1v1h-1zM1754 275h1v1h-1zM1754 278h1v1h-1zM1754 281h1v1h-1zM1754 284h1v1h-1zM1755 287h1v1h-1zM1755 290h1v1h-1zM1755 293h1v1h-1zM1755 296h1v1h-1zM1755 299h1v1h-1zM1755 302h1v1h-1zM1756 305h1v1h-1zM1756 306h1v1h-1zM1756 303h1v1h-1zM1756 300h1v1h-1zM1756 297h1v1h-1zM1756 294h1v1h-1zM1756 291h1v1h-1zM1756 288h1v1h-1zM1756 285h1v1h-1zM1756 282h1v1h-1zM1756 279h1v1h-1zM1756 276h1v1h-1zM1757 273h1v1h-1zM1757 270h1v1h-1zM1757 267h1v1h-1zM1757 264h1v1h-1zM1757 261h1v1h-1zM1757 258h1v1h-1zM1757 256h1v1h-1zM1757 259h1v1h-1zM1757 262h1v1h-1zM1758 265h1v1h-1zM1758 268h1v1h-1zM1758 271h1v1h-1zM1758 274h1v1h-1zM1758 277h1v1h-1zM1759 280h1v1h-1zM1759 277h1v1h-1zM1759 274h1v1h-1zM1759 271h1v1h-1zM1759 268h1v1h-1zM1759 265h1v1h-1zM1760 262h1v1h-1zM1760 259h1v1h-1zM1760 256h1v1h-1zM1760 255h1v1h-1zM1760 257h1v1h-1zM1760 260h1v1h-1zM1760 263h1v1h-1zM1761 266h1v1h-1zM1761 269h1v1h-1zM1761 272h1v1h-1zM1761 275h1v1h-1zM1761 278h1v1h-1zM1761 281h1v1h-1zM1761 284h1v1h-1zM1761 287h1v1h-1zM1762 290h1v1h-1zM1762 293h1v1h-1zM1762 294h1v1h-1zM1762 291h1v1h-1zM1762 288h1v1h-1zM1762 285h1v1h-1zM1762 282h1v1h-1zM1762 279h1v1h-1zM1762 276h1v1h-1zM1762 273h1v1h-1zM1762 270h1v1h-1zM1763 267h1v1h-1zM1763 264h1v1h-1zM1763 261h1v1h-1zM1763 258h1v1h-1zM1763 255h1v1h-1zM1763 252h1v1h-1zM1763 249h1v1h-1zM1764 255h1v1h-1zM1764 258h1v1h-1zM1764 261h1v1h-1zM1764 264h1v1h-1zM1765 267h1v1h-1zM1765 269h1v1h-1zM1765 266h1v1h-1zM1765 263h1v1h-1zM1765 260h1v1h-1zM1766 257h1v1h-1zM1766 254h1v1h-1zM1766 251h1v1h-1zM1766 249h1v1h-1zM1768 247h1v1h-1zM1769 245h1v1h-1zM1771 245h1v1h-1zM1772 244h1v1h-1zM1774 245h1v1h-1zM1775 243h1v1h-1zM1776 245h1v1h-1zM1777 246h1v1h-1zM1778 247h1v1h-1zM1780 249h1v1h-1zM1781 249h1v1h-1zM1782 252h1v1h-1zM1783 255h1v1h-1zM1783 256h1v1h-1zM1783 253h1v1h-1zM1784 250h1v1h-1zM1784 247h1v1h-1zM1784 244h1v1h-1zM1784 241h1v1h-1zM1785 238h1v1h-1zM1786 241h1v1h-1zM1786 243h1v1h-1zM1787 240h1v1h-1zM1788 238h1v1h-1zM1789 241h1v1h-1zM1789 243h1v1h-1zM1791 240h1v1h-1zM1791 243h1v1h-1zM1792 246h1v1h-1zM1792 248h1v1h-1zM1793 245h1v1h-1zM1794 244h1v1h-1zM1795 246h1v1h-1zM1796 243h1v1h-1zM1797 241h1v1h-1zM1798 244h1v1h-1zM1799 241h1v1h-1zM1800 240h1v1h-1zM1800 243h1v1h-1zM1801 246h1v1h-1zM1801 249h1v1h-1zM1801 251h1v1h-1zM1802 248h1v1h-1zM1802 245h1v1h-1zM1802 242h1v1h-1zM1802 239h1v1h-1zM1802 236h1v1h-1zM1803 233h1v1h-1zM1803 230h1v1h-1zM1803 228h1v1h-1zM1803 231h1v1h-1zM1804 234h1v1h-1zM1804 237h1v1h-1zM1804 240h1v1h-1zM1805 237h1v1h-1zM1805 234h1v1h-1zM1806 232h1v1h-1zM1806 235h1v1h-1zM1806 238h1v1h-1zM1807 241h1v1h-1zM1807 244h1v1h-1zM1807 247h1v1h-1zM1807 248h1v1h-1zM1808 245h1v1h-1zM1808 242h1v1h-1zM1808 239h1v1h-1zM1809 236h1v1h-1zM1809 233h1v1h-1zM1810 235h1v1h-1zM1812 232h1v1h-1zM1813 235h1v1h-1zM1814 236h1v1h-1zM1814 233h1v1h-1zM1814 230h1v1h-1zM1815 227h1v1h-1zM1815 226h1v1h-1zM1815 229h1v1h-1zM1816 232h1v1h-1zM1816 235h1v1h-1zM1816 238h1v1h-1zM1817 238h1v1h-1zM1817 235h1v1h-1zM1818 233h1v1h-1zM1818 232h1v1h-1zM1819 235h1v1h-1zM1819 238h1v1h-1zM1820 239h1v1h-1zM1821 236h1v1h-1zM1821 235h1v1h-1zM1822 238h1v1h-1zM1822 241h1v1h-1zM1822 244h1v1h-1zM1823 246h1v1h-1zM1823 247h1v1h-1zM1823 244h1v1h-1zM1824 241h1v1h-1zM1824 238h1v1h-1zM1824 237h1v1h-1zM1825 240h1v1h-1zM1826 243h1v1h-1zM1826 244h1v1h-1zM1827 241h1v1h-1zM1827 240h1v1h-1zM1828 243h1v1h-1zM1829 246h1v1h-1zM1829 247h1v1h-1zM1829 244h1v1h-1zM1830 241h1v1h-1zM1830 238h1v1h-1zM1830 235h1v1h-1zM1830 234h1v1h-1zM1831 237h1v1h-1zM1831 240h1v1h-1zM1831 243h1v1h-1zM1831 246h1v1h-1zM1832 249h1v1h-1zM1832 251h1v1h-1zM1833 248h1v1h-1zM1834 251h1v1h-1zM1834 254h1v1h-1zM1834 257h1v1h-1zM1834 260h1v1h-1zM1834 263h1v1h-1zM1834 266h1v1h-1zM1834 269h1v1h-1zM1835 272h1v1h-1zM1835 275h1v1h-1zM1835 278h1v1h-1zM1835 279h1v1h-1zM1835 276h1v1h-1zM1835 273h1v1h-1zM1835 270h1v1h-1zM1836 267h1v1h-1zM1836 264h1v1h-1zM1836 261h1v1h-1zM1836 258h1v1h-1zM1836 255h1v1h-1zM1836 252h1v1h-1zM1836 251h1v1h-1zM1838 253h1v1h-1zM1839 251h1v1h-1zM1841 253h1v1h-1zM1841 250h1v1h-1zM1842 247h1v1h-1zM1842 244h1v1h-1zM1843 243h1v1h-1zM1844 245h1v1h-1zM1844 247h1v1h-1zM1844 244h1v1h-1zM1845 241h1v1h-1zM1845 238h1v1h-1zM1846 235h1v1h-1zM1846 234h1v1h-1zM1846 237h1v1h-1zM1846 240h1v1h-1zM1847 243h1v1h-1zM1847 246h1v1h-1zM1847 248h1v1h-1zM1848 245h1v1h-1zM1849 243h1v1h-1zM1849 240h1v1h-1zM1850 237h1v1h-1zM1851 234h1v1h-1zM1851 231h1v1h-1zM1852 228h1v1h-1zM1853 230h1v1h-1zM1854 228h1v1h-1zM1855 226h1v1h-1zM1855 229h1v1h-1zM1856 232h1v1h-1zM1857 229h1v1h-1zM1858 226h1v1h-1zM1858 229h1v1h-1zM1859 232h1v1h-1zM1859 234h1v1h-1zM1861 232h1v1h-1zM1861 235h1v1h-1zM1862 238h1v1h-1zM1862 240h1v1h-1zM1863 237h1v1h-1zM1863 234h1v1h-1zM1864 231h1v1h-1zM1864 229h1v1h-1zM1864 232h1v1h-1zM1865 235h1v1h-1zM1865 237h1v1h-1zM1866 234h1v1h-1zM1866 231h1v1h-1zM1866 228h1v1h-1zM1866 225h1v1h-1zM1866 222h1v1h-1zM1867 219h1v1h-1zM1867 216h1v1h-1zM1867 213h1v1h-1zM1868 222h1v1h-1zM1868 225h1v1h-1zM1868 228h1v1h-1zM1868 231h1v1h-1zM1868 233h1v1h-1zM1870 230h1v1h-1z" fill="#ffff00"/><path d="M243.5,525.5 H1008.5 M243.5,551.5 H1008.5 M243.5,577.5 H1008.5 M243.5,603.5 H1008.5 M243.5,629.5 H1008.5 M243.5,655.5 H1008.5 M243.5,682.5 H1008.5 M243.5,708.5 H1008.5 M243.5,734.5 H1008.5 M243.5,760.5 H1008.5 M243.5,786.5 H1008.5 M243.5,812.5 H1008.5 M306.5,499.5 V839.5 M370.5,499.5 V839.5 M433.5,499.5 V839.5 M497.5,499.5 V839.5 M561.5,499.5 V839.5 M624.5,499.5 V839.5 M688.5,499.5 V839.5 M752.5,499.5 V839.5 M815.5,499.5 V839.5 M879.5,499.5 V839.5 M943.5,499.5 V839.5" fill="none" stroke="#555555" stroke-width="1" stroke-dasharray="4 2"/><path d="M243.5,499.5 H1008.5 V839.5 H243.5 Z M240.5,499.5 H243.5 M240.5,525.5 H243.5 M240.5,551.5 H243.5 M240.5,577.5 H243.5 M240.5,603.5 H243.5 M240.5,629.5 H243.5 M240.5,655.5 H243.5 M240.5,682.5 H243.5 M240.5,708.5 H243.5 M240.5,734.5 H243.5 M240.5,760.5 H243.5 M240.5,786.5 H243.5 M240.5,812.5 H243.5 M240.5,839.5 H243.5 M1008.5,525.5 H1011.5 M1008.5,603.5 H1011.5 M1008.5,682.5 H1011.5 M1008.5,760.5 H1011.5 M1008.5,839.5 H1011.5 M306.5,839.5 V842.5 M370.5,839.5 V842.5 M433.5,839.5 V842.5 M497.5,839.5 V842.5 M561.5,839.5 V842.5 M624.5,839.5 V842.5 M688.5,839.5 V842.5 M752.5,839.5 V842.5 M815.5,839.5 V842.5 M879.5,839.5 V842.5 M943.5,839.5 V842.5 M1007.5,839.5 V842.5" fill="none" stroke="#ffffff" stroke-width="1"/><path d="M244.5,525.5 H1008.0" stroke="#00ff00" stroke-width="1"/><path d="M243 669h1v1h-1zM245 670h1v1h-1zM246 672h1v1h-1zM246 673h1v1h-1zM248 673h1v1h-1zM249 674h1v1h-1zM251 675h1v1h-1zM252 677h1v1h-1zM254 678h1v1h-1zM255 680h1v1h-1zM257 681h1v1h-1zM258 682h1v1h-1zM260 683h1v1h-1zM261 684h1v1h-1zM263 685h1v1h-1zM264 686h1v1h-1zM266 684h1v1h-1zM267 683h1v1h-1zM269 682h1v1h-1zM271 681h1v1h-1zM272 679h1v1h-1zM274 679h1v1h-1zM275 678h1v1h-1zM277 678h1v1h-1zM278 677h1v1h-1zM280 677h1v1h-1zM281 676h1v1h-1zM283 678h1v1h-1zM284 679h1v1h-1zM286 679h1v1h-1zM287 680h1v1h-1zM289 681h1v1h-1zM290 682h1v1h-1zM292 683h1v1h-1zM293 685h1v1h-1zM293 686h1v1h-1zM295 687h1v1h-1zM296 689h1v1h-1zM298 689h1v1h-1zM299 692h1v1h-1zM299 695h1v1h-1zM300 698h1v1h-1zM301 695h1v1h-1zM301 694h1v1h-1zM303 695h1v1h-1zM304 696h1v1h-1zM306 698h1v1h-1zM307 697h1v1h-1zM309 696h1v1h-1zM310 695h1v1h-1zM312 695h1v1h-1zM313 696h1v1h-1zM315 695h1v1h-1zM316 693h1v1h-1zM316 692h1v1h-1zM317 695h1v1h-1zM318 698h1v1h-1zM319 695h1v1h-1zM319 692h1v1h-1zM320 695h1v1h-1zM321 698h1v1h-1zM321 700h1v1h-1zM322 700h1v1h-1zM324 701h1v1h-1zM326 702h1v1h-1zM326 705h1v1h-1zM327 708h1v1h-1zM327 710h1v1h-1zM328 707h1v1h-1zM329 706h1v1h-1zM329 709h1v1h-1zM329 712h1v1h-1zM329 715h1v1h-1zM329 718h1v1h-1zM329 721h1v1h-1zM330 724h1v1h-1zM330 727h1v1h-1zM330 730h1v1h-1zM330 733h1v1h-1zM330 734h1v1h-1zM330 731h1v1h-1zM331 728h1v1h-1zM331 725h1v1h-1zM331 722h1v1h-1zM331 719h1v1h-1zM332 716h1v1h-1zM332 719h1v1h-1zM332 722h1v1h-1zM333 725h1v1h-1zM333 728h1v1h-1zM333 730h1v1h-1zM334 727h1v1h-1zM334 724h1v1h-1zM335 723h1v1h-1zM335 726h1v1h-1zM335 729h1v1h-1zM335 732h1v1h-1zM336 735h1v1h-1zM336 738h1v1h-1zM336 741h1v1h-1zM337 735h1v1h-1zM337 732h1v1h-1zM337 729h1v1h-1zM338 726h1v1h-1zM338 725h1v1h-1zM339 725h1v1h-1zM340 722h1v1h-1zM341 720h1v1h-1zM341 719h1v1h-1zM341 716h1v1h-1zM342 713h1v1h-1zM342 711h1v1h-1zM343 708h1v1h-1zM344 705h1v1h-1zM344 704h1v1h-1zM345 706h1v1h-1zM346 703h1v1h-1zM347 700h1v1h-1zM347 699h1v1h-1zM348 702h1v1h-1zM348 704h1v1h-1zM349 701h1v1h-1zM350 698h1v1h-1zM351 697h1v1h-1zM353 695h1v1h-1zM354 698h1v1h-1zM354 701h1v1h-1zM355 704h1v1h-1zM355 701h1v1h-1zM356 698h1v1h-1zM357 701h1v1h-1zM357 704h1v1h-1zM358 706h1v1h-1zM358 703h1v1h-1zM359 701h1v1h-1zM359 704h1v1h-1zM360 707h1v1h-1zM360 710h1v1h-1zM360 713h1v1h-1zM360 716h1v1h-1zM360 719h1v1h-1zM361 722h1v1h-1zM361 719h1v1h-1zM362 716h1v1h-1zM362 713h1v1h-1zM363 716h1v1h-1zM363 719h1v1h-1zM363 722h1v1h-1zM364 725h1v1h-1zM364 726h1v1h-1zM364 723h1v1h-1zM364 720h1v1h-1zM365 717h1v1h-1zM365 714h1v1h-1zM365 712h1v1h-1zM366 709h1v1h-1zM367 706h1v1h-1zM367 703h1v1h-1zM368 700h1v1h-1zM368 699h1v1h-1zM369 702h1v1h-1zM370 704h1v1h-1zM370 705h1v1h-1zM371 702h1v1h-1zM371 700h1v1h-1zM373 701h1v1h-1zM374 699h1v1h-1zM375 701h1v1h-1zM376 703h1v1h-1zM376 700h1v1h-1zM377 697h1v1h-1zM377 694h1v1h-1zM377 691h1v1h-1zM378 694h1v1h-1zM379 697h1v1h-1zM379 699h1v1h-1zM381 697h1v1h-1zM381 700h1v1h-1zM382 702h1v1h-1zM383 699h1v1h-1zM383 696h1v1h-1zM384 696h1v1h-1zM385 695h1v1h-1zM387 693h1v1h-1zM388 693h1v1h-1zM390 694h1v1h-1zM390 697h1v1h-1zM391 700h1v1h-1zM391 702h1v1h-1zM392 699h1v1h-1zM393 697h1v1h-1zM394 699h1v1h-1zM396 697h1v1h-1zM396 696h1v1h-1zM397 695h1v1h-1zM399 694h1v1h-1zM400 693h1v1h-1zM402 690h1v1h-1zM403 688h1v1h-1zM405 687h1v1h-1zM406 687h1v1h-1zM407 684h1v1h-1zM408 681h1v1h-1zM408 678h1v1h-1zM409 684h1v1h-1zM409 687h1v1h-1zM410 688h1v1h-1zM410 685h1v1h-1zM411 682h1v1h-1zM411 679h1v1h-1zM412 681h1v1h-1zM413 682h1v1h-1zM414 680h1v1h-1zM415 683h1v1h-1zM415 686h1v1h-1zM416 687h1v1h-1zM416 684h1v1h-1zM417 681h1v1h-1zM418 684h1v1h-1zM419 686h1v1h-1zM419 683h1v1h-1zM420 680h1v1h-1zM420 679h1v1h-1zM421 682h1v1h-1zM421 685h1v1h-1zM422 687h1v1h-1zM422 684h1v1h-1zM422 681h1v1h-1zM423 678h1v1h-1zM423 675h1v1h-1zM423 672h1v1h-1zM423 671h1v1h-1zM424 674h1v1h-1zM424 677h1v1h-1zM424 680h1v1h-1zM424 683h1v1h-1zM425 686h1v1h-1zM425 688h1v1h-1zM426 685h1v1h-1zM426 682h1v1h-1zM427 685h1v1h-1zM428 688h1v1h-1zM428 685h1v1h-1zM429 682h1v1h-1zM429 679h1v1h-1zM430 682h1v1h-1zM431 684h1v1h-1zM432 684h1v1h-1zM434 687h1v1h-1zM434 688h1v1h-1zM436 685h1v1h-1zM436 688h1v1h-1zM437 691h1v1h-1zM438 688h1v1h-1zM439 685h1v1h-1zM440 688h1v1h-1zM440 689h1v1h-1zM441 686h1v1h-1zM442 684h1v1h-1zM443 681h1v1h-1zM443 679h1v1h-1zM445 680h1v1h-1zM446 683h1v1h-1zM446 684h1v1h-1zM447 681h1v1h-1zM448 679h1v1h-1zM448 682h1v1h-1zM449 685h1v1h-1zM450 683h1v1h-1zM451 682h1v1h-1zM452 681h1v1h-1zM454 678h1v1h-1zM454 677h1v1h-1zM455 680h1v1h-1zM457 678h1v1h-1zM458 676h1v1h-1zM458 675h1v1h-1zM460 675h1v1h-1zM462 676h1v1h-1zM463 676h1v1h-1zM464 679h1v1h-1zM465 679h1v1h-1zM466 682h1v1h-1zM466 683h1v1h-1zM466 686h1v1h-1zM466 689h1v1h-1zM467 692h1v1h-1zM467 695h1v1h-1zM467 698h1v1h-1zM467 701h1v1h-1zM467 704h1v1h-1zM468 707h1v1h-1zM468 708h1v1h-1zM469 711h1v1h-1zM469 713h1v1h-1zM469 716h1v1h-1zM470 719h1v1h-1zM470 722h1v1h-1zM470 725h1v1h-1zM471 727h1v1h-1zM471 724h1v1h-1zM471 721h1v1h-1zM472 718h1v1h-1zM472 715h1v1h-1zM472 714h1v1h-1zM473 717h1v1h-1zM474 718h1v1h-1zM474 715h1v1h-1zM474 712h1v1h-1zM474 709h1v1h-1zM474 706h1v1h-1zM474 703h1v1h-1zM475 700h1v1h-1zM475 697h1v1h-1zM475 694h1v1h-1zM475 691h1v1h-1zM475 688h1v1h-1zM475 685h1v1h-1zM475 684h1v1h-1zM476 687h1v1h-1zM477 689h1v1h-1zM478 686h1v1h-1zM478 684h1v1h-1zM479 681h1v1h-1zM479 678h1v1h-1zM480 675h1v1h-1zM480 673h1v1h-1zM480 670h1v1h-1zM481 667h1v1h-1zM481 665h1v1h-1zM483 668h1v1h-1zM483 669h1v1h-1zM483 666h1v1h-1zM484 663h1v1h-1zM484 660h1v1h-1zM484 657h1v1h-1zM484 656h1v1h-1zM485 659h1v1h-1zM486 661h1v1h-1zM487 658h1v1h-1zM487 656h1v1h-1zM489 659h1v1h-1zM489 660h1v1h-1zM490 663h1v1h-1zM491 665h1v1h-1zM492 668h1v1h-1zM494 670h1v1h-1zM495 672h1v1h-1zM495 673h1v1h-1zM497 671h1v1h-1zM498 671h1v1h-1zM500 671h1v1h-1zM501 673h1v1h-1zM503 673h1v1h-1zM503 676h1v1h-1zM504 679h1v1h-1zM504 682h1v1h-1zM504 683h1v1h-1zM505 680h1v1h-1zM506 679h1v1h-1zM506 682h1v1h-1zM506 685h1v1h-1zM506 688h1v1h-1zM507 691h1v1h-1zM507 694h1v1h-1zM507 697h1v1h-1zM507 700h1v1h-1zM507 703h1v1h-1zM507 706h1v1h-1zM508 703h1v1h-1zM508 700h1v1h-1zM508 697h1v1h-1zM508 694h1v1h-1zM509 691h1v1h-1zM509 689h1v1h-1zM509 692h1v1h-1zM509 695h1v1h-1zM510 698h1v1h-1zM510 701h1v1h-1zM510 704h1v1h-1zM510 707h1v1h-1zM510 709h1v1h-1zM511 706h1v1h-1zM512 703h1v1h-1zM512 702h1v1h-1zM513 699h1v1h-1zM514 696h1v1h-1zM515 693h1v1h-1zM515 691h1v1h-1zM516 688h1v1h-1zM516 685h1v1h-1zM517 685h1v1h-1zM517 682h1v1h-1zM518 679h1v1h-1zM519 682h1v1h-1zM520 683h1v1h-1zM520 680h1v1h-1zM520 677h1v1h-1zM520 674h1v1h-1zM521 671h1v1h-1zM521 668h1v1h-1zM521 666h1v1h-1zM523 666h1v1h-1zM524 663h1v1h-1zM525 666h1v1h-1zM526 668h1v1h-1zM527 665h1v1h-1zM527 664h1v1h-1zM529 665h1v1h-1zM530 662h1v1h-1zM530 661h1v1h-1zM532 660h1v1h-1zM533 658h1v1h-1zM535 661h1v1h-1zM536 659h1v1h-1zM536 658h1v1h-1zM537 661h1v1h-1zM537 664h1v1h-1zM538 667h1v1h-1zM538 669h1v1h-1zM539 666h1v1h-1zM539 663h1v1h-1zM539 661h1v1h-1zM541 662h1v1h-1zM542 661h1v1h-1zM543 664h1v1h-1zM543 667h1v1h-1zM544 670h1v1h-1zM545 673h1v1h-1zM546 675h1v1h-1zM547 677h1v1h-1zM547 679h1v1h-1zM549 681h1v1h-1zM549 683h1v1h-1zM549 686h1v1h-1zM550 689h1v1h-1zM550 692h1v1h-1zM550 693h1v1h-1zM551 690h1v1h-1zM551 687h1v1h-1zM551 684h1v1h-1zM552 682h1v1h-1zM552 685h1v1h-1zM552 688h1v1h-1zM553 691h1v1h-1zM553 694h1v1h-1zM553 695h1v1h-1zM554 692h1v1h-1zM554 689h1v1h-1zM554 686h1v1h-1zM555 683h1v1h-1zM555 680h1v1h-1zM556 677h1v1h-1zM556 674h1v1h-1zM556 673h1v1h-1zM557 670h1v1h-1zM557 667h1v1h-1zM558 666h1v1h-1zM558 669h1v1h-1zM559 672h1v1h-1zM559 673h1v1h-1zM560 670h1v1h-1zM560 667h1v1h-1zM560 664h1v1h-1zM561 661h1v1h-1zM561 664h1v1h-1zM562 667h1v1h-1zM562 669h1v1h-1zM563 666h1v1h-1zM563 663h1v1h-1zM563 660h1v1h-1zM564 657h1v1h-1zM564 659h1v1h-1zM565 662h1v1h-1zM565 665h1v1h-1zM565 667h1v1h-1zM566 664h1v1h-1zM566 661h1v1h-1zM567 658h1v1h-1zM567 657h1v1h-1zM568 659h1v1h-1zM568 661h1v1h-1zM569 658h1v1h-1zM570 657h1v1h-1zM572 656h1v1h-1zM573 653h1v1h-1zM573 652h1v1h-1zM574 655h1v1h-1zM575 656h1v1h-1zM576 655h1v1h-1zM578 655h1v1h-1zM579 656h1v1h-1zM581 658h1v1h-1zM582 659h1v1h-1zM584 661h1v1h-1zM585 664h1v1h-1zM586 667h1v1h-1zM587 667h1v1h-1zM588 664h1v1h-1zM588 663h1v1h-1zM589 665h1v1h-1zM589 668h1v1h-1zM590 671h1v1h-1zM591 672h1v1h-1zM592 675h1v1h-1zM593 677h1v1h-1zM594 677h1v1h-1zM595 680h1v1h-1zM595 683h1v1h-1zM595 686h1v1h-1zM596 689h1v1h-1zM596 691h1v1h-1zM596 688h1v1h-1zM597 685h1v1h-1zM597 682h1v1h-1zM597 679h1v1h-1zM597 676h1v1h-1zM598 679h1v1h-1zM599 682h1v1h-1zM599 679h1v1h-1zM600 676h1v1h-1zM600 673h1v1h-1zM600 670h1v1h-1zM600 667h1v1h-1zM601 666h1v1h-1zM601 669h1v1h-1zM602 672h1v1h-1zM602 673h1v1h-1zM602 670h1v1h-1zM603 667h1v1h-1zM603 664h1v1h-1zM603 661h1v1h-1zM604 658h1v1h-1zM604 661h1v1h-1zM604 664h1v1h-1zM604 667h1v1h-1zM604 670h1v1h-1zM605 673h1v1h-1zM605 676h1v1h-1zM605 678h1v1h-1zM605 675h1v1h-1zM605 672h1v1h-1zM606 669h1v1h-1zM606 666h1v1h-1zM606 663h1v1h-1zM606 660h1v1h-1zM606 657h1v1h-1zM606 654h1v1h-1zM607 651h1v1h-1zM607 649h1v1h-1zM607 652h1v1h-1zM607 655h1v1h-1zM608 658h1v1h-1zM608 661h1v1h-1zM608 663h1v1h-1zM609 660h1v1h-1zM609 657h1v1h-1zM610 654h1v1h-1zM610 657h1v1h-1zM611 660h1v1h-1zM611 661h1v1h-1zM612 658h1v1h-1zM612 655h1v1h-1zM612 652h1v1h-1zM612 649h1v1h-1zM613 646h1v1h-1zM613 643h1v1h-1zM614 649h1v1h-1zM614 650h1v1h-1zM616 650h1v1h-1zM617 647h1v1h-1zM619 650h1v1h-1zM620 653h1v1h-1zM620 656h1v1h-1zM622 657h1v1h-1zM622 660h1v1h-1zM622 663h1v1h-1zM623 666h1v1h-1zM623 669h1v1h-1zM623 672h1v1h-1zM623 675h1v1h-1zM624 672h1v1h-1zM624 669h1v1h-1zM624 666h1v1h-1zM624 663h1v1h-1zM624 660h1v1h-1zM624 657h1v1h-1zM625 654h1v1h-1zM625 651h1v1h-1zM625 648h1v1h-1zM626 654h1v1h-1zM626 657h1v1h-1zM626 660h1v1h-1zM626 663h1v1h-1zM627 665h1v1h-1zM627 662h1v1h-1zM627 659h1v1h-1zM628 656h1v1h-1zM628 655h1v1h-1zM628 658h1v1h-1zM629 661h1v1h-1zM629 664h1v1h-1zM630 666h1v1h-1zM630 663h1v1h-1zM630 660h1v1h-1zM631 657h1v1h-1zM631 654h1v1h-1zM632 656h1v1h-1zM633 657h1v1h-1zM633 654h1v1h-1zM634 651h1v1h-1zM634 654h1v1h-1zM634 657h1v1h-1zM635 660h1v1h-1zM635 663h1v1h-1zM635 666h1v1h-1zM635 669h1v1h-1zM635 672h1v1h-1zM635 675h1v1h-1zM635 678h1v1h-1zM635 681h1v1h-1zM636 684h1v1h-1zM636 687h1v1h-1zM636 688h1v1h-1zM636 685h1v1h-1zM636 682h1v1h-1zM636 679h1v1h-1zM637 676h1v1h-1zM637 673h1v1h-1zM637 670h1v1h-1zM637 667h1v1h-1zM637 666h1v1h-1zM637 669h1v1h-1zM638 672h1v1h-1zM638 675h1v1h-1zM638 678h1v1h-1zM638 681h1v1h-1zM639 684h1v1h-1zM639 681h1v1h-1zM639 678h1v1h-1zM639 675h1v1h-1zM640 672h1v1h-1zM640 669h1v1h-1zM640 666h1v1h-1zM640 665h1v1h-1zM642 663h1v1h-1zM642 660h1v1h-1zM643 657h1v1h-1zM643 654h1v1h-1zM643 653h1v1h-1zM643 655h1v1h-1zM644 658h1v1h-1zM644 661h1v1h-1zM644 664h1v1h-1zM644 667h1v1h-1zM644 670h1v1h-1zM644 673h1v1h-1zM644 676h1v1h-1zM645 679h1v1h-1zM645 682h1v1h-1zM645 685h1v1h-1zM645 676h1v1h-1zM645 673h1v1h-1zM646 670h1v1h-1zM646 667h1v1h-1zM646 664h1v1h-1zM646 661h1v1h-1zM646 658h1v1h-1zM646 655h1v1h-1zM646 653h1v1h-1zM647 655h1v1h-1zM647 658h1v1h-1zM647 661h1v1h-1zM647 664h1v1h-1zM647 667h1v1h-1zM647 670h1v1h-1zM647 673h1v1h-1zM648 676h1v1h-1zM648 679h1v1h-1zM648 682h1v1h-1zM648 685h1v1h-1zM649 679h1v1h-1zM649 676h1v1h-1zM649 673h1v1h-1zM649 670h1v1h-1zM649 669h1v1h-1zM651 668h1v1h-1zM651 665h1v1h-1zM651 662h1v1h-1zM652 659h1v1h-1zM652 656h1v1h-1zM652 653h1v1h-1zM652 650h1v1h-1zM653 649h1v1h-1zM653 652h1v1h-1zM653 655h1v1h-1zM654 658h1v1h-1zM654 661h1v1h-1zM654 662h1v1h-1zM654 659h1v1h-1zM654 656h1v1h-1zM655 653h1v1h-1zM655 650h1v1h-1zM655 647h1v1h-1zM655 644h1v1h-1zM656 642h1v1h-1zM656 645h1v1h-1zM656 648h1v1h-1zM656 651h1v1h-1zM657 654h1v1h-1zM657 657h1v1h-1zM657 659h1v1h-1zM657 656h1v1h-1zM658 653h1v1h-1zM658 650h1v1h-1zM658 647h1v1h-1zM658 644h1v1h-1zM659 641h1v1h-1zM659 644h1v1h-1zM659 647h1v1h-1zM660 650h1v1h-1zM660 653h1v1h-1zM660 655h1v1h-1zM661 652h1v1h-1zM661 649h1v1h-1zM662 646h1v1h-1zM662 645h1v1h-1zM662 648h1v1h-1zM662 651h1v1h-1zM662 654h1v1h-1zM663 657h1v1h-1zM663 660h1v1h-1zM663 663h1v1h-1zM663 666h1v1h-1zM664 660h1v1h-1zM664 657h1v1h-1zM664 654h1v1h-1zM664 651h1v1h-1zM664 648h1v1h-1zM665 645h1v1h-1zM665 644h1v1h-1zM665 647h1v1h-1zM665 650h1v1h-1zM666 653h1v1h-1zM666 656h1v1h-1zM666 659h1v1h-1zM668 656h1v1h-1zM668 659h1v1h-1zM669 662h1v1h-1zM669 663h1v1h-1zM670 660h1v1h-1zM670 657h1v1h-1zM671 655h1v1h-1zM671 658h1v1h-1zM671 661h1v1h-1zM672 664h1v1h-1zM672 667h1v1h-1zM672 670h1v1h-1zM672 671h1v1h-1zM673 668h1v1h-1zM673 665h1v1h-1zM674 662h1v1h-1zM674 660h1v1h-1zM674 663h1v1h-1zM675 666h1v1h-1zM675 669h1v1h-1zM676 666h1v1h-1zM676 663h1v1h-1zM677 660h1v1h-1zM678 663h1v1h-1zM678 665h1v1h-1zM680 662h1v1h-1zM680 661h1v1h-1zM681 664h1v1h-1zM681 667h1v1h-1zM682 667h1v1h-1zM682 664h1v1h-1zM682 661h1v1h-1zM683 658h1v1h-1zM683 655h1v1h-1zM683 654h1v1h-1zM683 657h1v1h-1zM684 660h1v1h-1zM684 663h1v1h-1zM684 666h1v1h-1zM684 669h1v1h-1zM684 672h1v1h-1zM685 673h1v1h-1zM685 670h1v1h-1zM686 667h1v1h-1zM687 670h1v1h-1zM688 671h1v1h-1zM689 668h1v1h-1zM689 667h1v1h-1zM690 664h1v1h-1zM691 663h1v1h-1zM691 660h1v1h-1zM691 657h1v1h-1zM692 654h1v1h-1zM692 651h1v1h-1zM692 648h1v1h-1zM693 651h1v1h-1zM693 654h1v1h-1zM694 656h1v1h-1zM694 657h1v1h-1zM694 654h1v1h-1zM694 651h1v1h-1zM695 648h1v1h-1zM695 645h1v1h-1zM695 642h1v1h-1zM695 639h1v1h-1zM696 642h1v1h-1zM696 645h1v1h-1zM697 648h1v1h-1zM697 649h1v1h-1zM697 646h1v1h-1zM697 643h1v1h-1zM698 640h1v1h-1zM698 637h1v1h-1zM698 634h1v1h-1zM698 632h1v1h-1zM699 635h1v1h-1zM699 638h1v1h-1zM699 641h1v1h-1zM699 644h1v1h-1zM700 647h1v1h-1zM700 650h1v1h-1zM701 647h1v1h-1zM701 645h1v1h-1zM702 648h1v1h-1zM702 651h1v1h-1zM703 654h1v1h-1zM704 651h1v1h-1zM704 650h1v1h-1zM706 653h1v1h-1zM707 650h1v1h-1zM707 647h1v1h-1zM708 645h1v1h-1zM708 648h1v1h-1zM708 651h1v1h-1zM709 654h1v1h-1zM709 656h1v1h-1zM710 658h1v1h-1zM711 659h1v1h-1zM712 661h1v1h-1zM712 662h1v1h-1zM714 660h1v1h-1zM714 663h1v1h-1zM715 666h1v1h-1zM715 667h1v1h-1zM716 664h1v1h-1zM717 662h1v1h-1zM717 665h1v1h-1zM718 668h1v1h-1zM718 669h1v1h-1zM718 666h1v1h-1zM719 663h1v1h-1zM719 660h1v1h-1zM719 657h1v1h-1zM719 654h1v1h-1zM720 651h1v1h-1zM720 649h1v1h-1zM720 652h1v1h-1zM720 655h1v1h-1zM720 658h1v1h-1zM720 661h1v1h-1zM720 664h1v1h-1zM720 667h1v1h-1zM720 670h1v1h-1zM721 673h1v1h-1zM721 676h1v1h-1zM721 679h1v1h-1zM721 682h1v1h-1zM721 685h1v1h-1zM721 688h1v1h-1zM721 691h1v1h-1zM722 685h1v1h-1zM722 682h1v1h-1zM722 679h1v1h-1zM722 676h1v1h-1zM722 673h1v1h-1zM722 670h1v1h-1zM722 667h1v1h-1zM722 664h1v1h-1zM723 661h1v1h-1zM723 658h1v1h-1zM723 655h1v1h-1zM723 664h1v1h-1zM723 667h1v1h-1zM724 670h1v1h-1zM724 673h1v1h-1zM724 676h1v1h-1zM724 679h1v1h-1zM724 682h1v1h-1zM724 685h1v1h-1zM724 686h1v1h-1zM724 683h1v1h-1zM725 680h1v1h-1zM725 677h1v1h-1zM725 674h1v1h-1zM725 671h1v1h-1zM725 668h1v1h-1zM725 665h1v1h-1zM725 662h1v1h-1zM726 659h1v1h-1zM726 656h1v1h-1zM726 653h1v1h-1zM726 651h1v1h-1zM726 654h1v1h-1zM727 657h1v1h-1zM727 660h1v1h-1zM727 663h1v1h-1zM727 665h1v1h-1zM728 662h1v1h-1zM729 659h1v1h-1zM729 657h1v1h-1zM729 660h1v1h-1zM730 663h1v1h-1zM730 666h1v1h-1zM730 667h1v1h-1zM731 664h1v1h-1zM731 661h1v1h-1zM731 658h1v1h-1zM731 655h1v1h-1zM731 652h1v1h-1zM732 649h1v1h-1zM732 646h1v1h-1zM732 645h1v1h-1zM733 648h1v1h-1zM733 651h1v1h-1zM733 653h1v1h-1zM734 650h1v1h-1zM734 647h1v1h-1zM735 644h1v1h-1zM735 643h1v1h-1zM736 646h1v1h-1zM737 648h1v1h-1zM737 645h1v1h-1zM737 642h1v1h-1zM738 639h1v1h-1zM738 636h1v1h-1zM738 635h1v1h-1zM739 638h1v1h-1zM739 641h1v1h-1zM740 643h1v1h-1zM740 640h1v1h-1zM741 637h1v1h-1zM741 634h1v1h-1zM742 637h1v1h-1zM743 638h1v1h-1zM744 638h1v1h-1zM745 640h1v1h-1zM746 641h1v1h-1zM747 644h1v1h-1zM748 646h1v1h-1zM749 647h1v1h-1zM750 650h1v1h-1zM750 651h1v1h-1zM751 654h1v1h-1zM751 657h1v1h-1zM752 660h1v1h-1zM752 661h1v1h-1zM752 658h1v1h-1zM753 655h1v1h-1zM753 652h1v1h-1zM753 649h1v1h-1zM754 651h1v1h-1zM754 654h1v1h-1zM754 657h1v1h-1zM755 660h1v1h-1zM755 663h1v1h-1zM755 664h1v1h-1zM755 661h1v1h-1zM756 658h1v1h-1zM756 655h1v1h-1zM756 652h1v1h-1zM756 651h1v1h-1zM757 654h1v1h-1zM757 657h1v1h-1zM757 660h1v1h-1zM757 663h1v1h-1zM757 666h1v1h-1zM757 669h1v1h-1zM757 672h1v1h-1zM757 675h1v1h-1zM758 678h1v1h-1zM758 681h1v1h-1zM758 684h1v1h-1zM758 686h1v1h-1zM758 683h1v1h-1zM758 680h1v1h-1zM759 677h1v1h-1zM759 674h1v1h-1zM759 671h1v1h-1zM759 668h1v1h-1zM759 667h1v1h-1zM760 669h1v1h-1zM760 672h1v1h-1zM760 675h1v1h-1zM760 678h1v1h-1zM760 681h1v1h-1zM760 684h1v1h-1zM760 687h1v1h-1zM760 690h1v1h-1zM761 693h1v1h-1zM761 696h1v1h-1zM761 699h1v1h-1zM761 702h1v1h-1zM761 704h1v1h-1zM761 701h1v1h-1zM762 698h1v1h-1zM762 695h1v1h-1zM763 692h1v1h-1zM763 695h1v1h-1zM763 698h1v1h-1zM763 701h1v1h-1zM764 704h1v1h-1zM764 707h1v1h-1zM764 709h1v1h-1zM764 706h1v1h-1zM764 703h1v1h-1zM764 700h1v1h-1zM764 697h1v1h-1zM764 694h1v1h-1zM765 691h1v1h-1zM765 688h1v1h-1zM765 685h1v1h-1zM765 682h1v1h-1zM765 679h1v1h-1zM765 676h1v1h-1zM765 673h1v1h-1zM765 670h1v1h-1zM765 667h1v1h-1zM765 664h1v1h-1zM765 661h1v1h-1zM766 658h1v1h-1zM766 657h1v1h-1zM767 660h1v1h-1zM767 661h1v1h-1zM768 658h1v1h-1zM768 655h1v1h-1zM769 652h1v1h-1zM769 651h1v1h-1zM769 654h1v1h-1zM770 657h1v1h-1zM770 659h1v1h-1zM771 656h1v1h-1zM771 653h1v1h-1zM772 651h1v1h-1zM773 653h1v1h-1zM774 651h1v1h-1zM775 650h1v1h-1zM775 653h1v1h-1zM775 656h1v1h-1zM775 659h1v1h-1zM776 662h1v1h-1zM776 665h1v1h-1zM776 668h1v1h-1zM776 669h1v1h-1zM777 666h1v1h-1zM777 663h1v1h-1zM777 660h1v1h-1zM778 657h1v1h-1zM778 656h1v1h-1zM778 659h1v1h-1zM778 662h1v1h-1zM778 665h1v1h-1zM779 668h1v1h-1zM779 671h1v1h-1zM779 674h1v1h-1zM779 677h1v1h-1zM779 680h1v1h-1zM780 677h1v1h-1zM781 674h1v1h-1zM781 673h1v1h-1zM782 675h1v1h-1zM782 677h1v1h-1zM784 675h1v1h-1zM784 674h1v1h-1zM785 677h1v1h-1zM785 679h1v1h-1zM786 676h1v1h-1zM786 673h1v1h-1zM786 670h1v1h-1zM787 667h1v1h-1zM787 664h1v1h-1zM788 662h1v1h-1zM789 659h1v1h-1zM789 656h1v1h-1zM789 653h1v1h-1zM790 650h1v1h-1zM790 647h1v1h-1zM791 650h1v1h-1zM792 653h1v1h-1zM792 650h1v1h-1zM793 649h1v1h-1zM793 651h1v1h-1zM794 654h1v1h-1zM794 657h1v1h-1zM794 660h1v1h-1zM795 663h1v1h-1zM795 664h1v1h-1zM795 661h1v1h-1zM796 658h1v1h-1zM797 655h1v1h-1zM798 655h1v1h-1zM798 652h1v1h-1zM799 649h1v1h-1zM799 646h1v1h-1zM799 644h1v1h-1zM800 647h1v1h-1zM800 650h1v1h-1zM800 653h1v1h-1zM801 656h1v1h-1zM801 653h1v1h-1zM802 650h1v1h-1zM803 652h1v1h-1zM804 653h1v1h-1zM804 650h1v1h-1zM805 647h1v1h-1zM805 646h1v1h-1zM806 649h1v1h-1zM806 652h1v1h-1zM806 655h1v1h-1zM807 658h1v1h-1zM807 655h1v1h-1zM808 652h1v1h-1zM808 651h1v1h-1zM810 653h1v1h-1zM811 650h1v1h-1zM811 649h1v1h-1zM812 651h1v1h-1zM812 654h1v1h-1zM813 657h1v1h-1zM813 654h1v1h-1zM814 651h1v1h-1zM814 648h1v1h-1zM814 647h1v1h-1zM816 646h1v1h-1zM816 643h1v1h-1zM817 640h1v1h-1zM817 637h1v1h-1zM817 634h1v1h-1zM818 632h1v1h-1zM819 634h1v1h-1zM820 631h1v1h-1zM821 629h1v1h-1zM821 632h1v1h-1zM821 635h1v1h-1zM821 638h1v1h-1zM821 641h1v1h-1zM822 644h1v1h-1zM822 647h1v1h-1zM822 650h1v1h-1zM823 644h1v1h-1zM823 641h1v1h-1zM823 638h1v1h-1zM823 635h1v1h-1zM824 632h1v1h-1zM824 630h1v1h-1zM824 633h1v1h-1zM824 636h1v1h-1zM824 639h1v1h-1zM824 642h1v1h-1zM825 645h1v1h-1zM825 648h1v1h-1zM825 651h1v1h-1zM825 653h1v1h-1zM825 650h1v1h-1zM826 647h1v1h-1zM826 644h1v1h-1zM826 641h1v1h-1zM826 638h1v1h-1zM827 635h1v1h-1zM827 633h1v1h-1zM827 636h1v1h-1zM827 639h1v1h-1zM828 642h1v1h-1zM828 645h1v1h-1zM828 648h1v1h-1zM828 650h1v1h-1zM829 647h1v1h-1zM830 645h1v1h-1zM831 648h1v1h-1zM831 649h1v1h-1zM832 646h1v1h-1zM833 644h1v1h-1zM833 647h1v1h-1zM833 650h1v1h-1zM834 653h1v1h-1zM834 656h1v1h-1zM834 659h1v1h-1zM834 662h1v1h-1zM835 659h1v1h-1zM836 656h1v1h-1zM836 655h1v1h-1zM836 657h1v1h-1zM836 660h1v1h-1zM837 663h1v1h-1zM837 666h1v1h-1zM837 669h1v1h-1zM837 672h1v1h-1zM837 673h1v1h-1zM838 670h1v1h-1zM838 667h1v1h-1zM839 664h1v1h-1zM839 662h1v1h-1zM839 665h1v1h-1zM839 668h1v1h-1zM839 671h1v1h-1zM839 674h1v1h-1zM840 677h1v1h-1zM840 680h1v1h-1zM840 683h1v1h-1zM840 686h1v1h-1zM840 689h1v1h-1zM840 692h1v1h-1zM840 694h1v1h-1zM841 691h1v1h-1zM841 688h1v1h-1zM841 685h1v1h-1zM841 682h1v1h-1zM841 679h1v1h-1zM841 676h1v1h-1zM841 673h1v1h-1zM841 670h1v1h-1zM842 667h1v1h-1zM842 664h1v1h-1zM842 661h1v1h-1zM842 658h1v1h-1zM842 657h1v1h-1zM842 660h1v1h-1zM843 663h1v1h-1zM843 666h1v1h-1zM843 669h1v1h-1zM844 671h1v1h-1zM844 668h1v1h-1zM844 665h1v1h-1zM844 662h1v1h-1zM844 659h1v1h-1zM845 656h1v1h-1zM845 653h1v1h-1zM845 650h1v1h-1zM846 656h1v1h-1zM846 659h1v1h-1zM847 662h1v1h-1zM847 659h1v1h-1zM847 656h1v1h-1zM847 653h1v1h-1zM847 650h1v1h-1zM848 647h1v1h-1zM848 644h1v1h-1zM848 641h1v1h-1zM848 640h1v1h-1zM849 643h1v1h-1zM850 644h1v1h-1zM850 641h1v1h-1zM851 638h1v1h-1zM851 636h1v1h-1zM853 635h1v1h-1zM854 632h1v1h-1zM855 629h1v1h-1zM855 626h1v1h-1zM856 624h1v1h-1zM857 622h1v1h-1zM857 621h1v1h-1zM859 621h1v1h-1zM860 618h1v1h-1zM860 615h1v1h-1zM862 616h1v1h-1zM862 613h1v1h-1zM863 610h1v1h-1zM863 609h1v1h-1zM864 612h1v1h-1zM864 615h1v1h-1zM865 617h1v1h-1zM866 620h1v1h-1zM867 623h1v1h-1zM868 625h1v1h-1zM868 626h1v1h-1zM869 623h1v1h-1zM869 622h1v1h-1zM870 625h1v1h-1zM871 628h1v1h-1zM872 625h1v1h-1zM872 623h1v1h-1zM873 622h1v1h-1zM873 625h1v1h-1zM873 628h1v1h-1zM873 631h1v1h-1zM874 634h1v1h-1zM874 637h1v1h-1zM874 640h1v1h-1zM874 641h1v1h-1zM874 638h1v1h-1zM875 635h1v1h-1zM875 632h1v1h-1zM876 630h1v1h-1zM876 633h1v1h-1zM877 636h1v1h-1zM877 639h1v1h-1zM878 633h1v1h-1zM878 630h1v1h-1zM879 627h1v1h-1zM879 630h1v1h-1zM879 633h1v1h-1zM879 636h1v1h-1zM880 639h1v1h-1zM880 642h1v1h-1zM880 645h1v1h-1zM880 646h1v1h-1zM882 643h1v1h-1zM882 646h1v1h-1zM882 649h1v1h-1zM883 652h1v1h-1zM883 655h1v1h-1zM883 657h1v1h-1zM884 654h1v1h-1zM884 651h1v1h-1zM885 649h1v1h-1zM885 652h1v1h-1zM885 655h1v1h-1zM885 658h1v1h-1zM885 661h1v1h-1zM886 664h1v1h-1zM886 667h1v1h-1zM886 670h1v1h-1zM886 673h1v1h-1zM886 675h1v1h-1zM887 672h1v1h-1zM887 670h1v1h-1zM888 667h1v1h-1zM888 670h1v1h-1zM888 673h1v1h-1zM889 676h1v1h-1zM889 679h1v1h-1zM889 681h1v1h-1zM890 678h1v1h-1zM891 675h1v1h-1zM891 678h1v1h-1zM891 681h1v1h-1zM891 684h1v1h-1zM891 687h1v1h-1zM892 690h1v1h-1zM892 693h1v1h-1zM892 696h1v1h-1zM892 699h1v1h-1zM892 702h1v1h-1zM892 705h1v1h-1zM892 708h1v1h-1zM893 702h1v1h-1zM893 699h1v1h-1zM893 696h1v1h-1zM893 693h1v1h-1zM893 690h1v1h-1zM893 687h1v1h-1zM893 684h1v1h-1zM893 681h1v1h-1zM893 678h1v1h-1zM893 675h1v1h-1zM893 672h1v1h-1zM894 669h1v1h-1zM894 666h1v1h-1zM894 663h1v1h-1zM894 660h1v1h-1zM894 657h1v1h-1zM894 654h1v1h-1zM895 657h1v1h-1zM896 654h1v1h-1zM896 651h1v1h-1zM897 648h1v1h-1zM897 645h1v1h-1zM899 643h1v1h-1zM900 640h1v1h-1zM900 639h1v1h-1zM901 636h1v1h-1zM901 633h1v1h-1zM902 631h1v1h-1zM902 629h1v1h-1zM903 626h1v1h-1zM903 625h1v1h-1zM905 626h1v1h-1zM906 625h1v1h-1zM907 628h1v1h-1zM908 629h1v1h-1zM909 626h1v1h-1zM909 625h1v1h-1zM911 625h1v1h-1zM912 624h1v1h-1zM914 627h1v1h-1zM915 629h1v1h-1zM916 632h1v1h-1zM916 635h1v1h-1zM917 638h1v1h-1zM918 635h1v1h-1zM918 633h1v1h-1zM919 630h1v1h-1zM920 628h1v1h-1zM920 625h1v1h-1zM921 623h1v1h-1zM921 620h1v1h-1zM922 623h1v1h-1zM923 626h1v1h-1zM924 623h1v1h-1zM924 620h1v1h-1zM924 619h1v1h-1zM925 622h1v1h-1zM925 625h1v1h-1zM925 628h1v1h-1zM925 631h1v1h-1zM925 634h1v1h-1zM925 637h1v1h-1zM926 640h1v1h-1zM926 643h1v1h-1zM926 646h1v1h-1zM926 647h1v1h-1zM926 644h1v1h-1zM926 641h1v1h-1zM927 638h1v1h-1zM927 635h1v1h-1zM927 632h1v1h-1zM927 629h1v1h-1zM927 626h1v1h-1zM928 624h1v1h-1zM928 627h1v1h-1zM928 630h1v1h-1zM928 633h1v1h-1zM929 636h1v1h-1zM929 639h1v1h-1zM930 633h1v1h-1zM930 630h1v1h-1zM930 627h1v1h-1zM931 626h1v1h-1zM931 629h1v1h-1zM932 632h1v1h-1zM932 635h1v1h-1zM932 636h1v1h-1zM933 633h1v1h-1zM933 630h1v1h-1zM934 629h1v1h-1zM935 628h1v1h-1zM937 627h1v1h-1zM938 625h1v1h-1zM940 622h1v1h-1zM941 624h1v1h-1zM942 621h1v1h-1zM943 619h1v1h-1zM943 618h1v1h-1zM944 620h1v1h-1zM944 621h1v1h-1zM946 619h1v1h-1zM946 618h1v1h-1zM947 619h1v1h-1zM948 616h1v1h-1zM949 613h1v1h-1zM949 612h1v1h-1zM950 615h1v1h-1zM950 618h1v1h-1zM950 619h1v1h-1zM952 616h1v1h-1zM953 619h1v1h-1zM954 621h1v1h-1zM955 621h1v1h-1zM956 624h1v1h-1zM957 624h1v1h-1zM958 627h1v1h-1zM960 628h1v1h-1zM961 630h1v1h-1zM963 632h1v1h-1zM963 633h1v1h-1zM964 630h1v1h-1zM964 628h1v1h-1zM965 631h1v1h-1zM965 634h1v1h-1zM965 637h1v1h-1zM966 640h1v1h-1zM966 641h1v1h-1zM966 638h1v1h-1zM967 635h1v1h-1zM967 632h1v1h-1zM967 629h1v1h-1zM968 632h1v1h-1zM968 635h1v1h-1zM969 637h1v1h-1zM969 634h1v1h-1zM970 631h1v1h-1zM970 630h1v1h-1zM971 633h1v1h-1zM971 636h1v1h-1zM972 639h1v1h-1zM972 641h1v1h-1zM973 638h1v1h-1zM973 635h1v1h-1zM973 634h1v1h-1zM975 634h1v1h-1zM976 631h1v1h-1zM976 630h1v1h-1zM978 633h1v1h-1zM978 634h1v1h-1zM978 631h1v1h-1zM979 628h1v1h-1zM979 625h1v1h-1zM979 623h1v1h-1zM980 626h1v1h-1zM980 629h1v1h-1zM981 632h1v1h-1zM981 635h1v1h-1zM982 632h1v1h-1zM982 629h1v1h-1zM983 627h1v1h-1zM983 630h1v1h-1zM984 633h1v1h-1zM984 634h1v1h-1zM984 631h1v1h-1zM985 628h1v1h-1zM985 625h1v1h-1zM985 622h1v1h-1zM985 619h1v1h-1zM986 616h1v1h-1zM986 619h1v1h-1zM986 622h1v1h-1zM986 625h1v1h-1zM987 628h1v1h-1zM987 631h1v1h-1zM987 633h1v1h-1zM987 630h1v1h-1zM988 627h1v1h-1zM988 624h1v1h-1zM988 621h1v1h-1zM988 618h1v1h-1zM989 615h1v1h-1zM989 614h1v1h-1zM990 616h1v1h-1zM991 614h1v1h-1zM992 613h1v1h-1zM993 615h1v1h-1zM994 612h1v1h-1zM995 611h1v1h-1zM996 614h1v1h-1zM996 616h1v1h-1zM998 617h1v1h-1zM999 618h1v1h-1zM1000 615h1v1h-1zM1001 614h1v1h-1zM1002 617h1v1h-1zM1002 620h1v1h-1zM1003 617h1v1h-1zM1003 614h1v1h-1zM1003 611h1v1h-1zM1004 608h1v1h-1zM1004 605h1v1h-1zM1004 603h1v1h-1zM1004 606h1v1h-1zM1005 609h1v1h-1zM1005 612h1v1h-1zM1006 609h1v1h-1z" fill="#ff0000"/></g></svg><div class="t" style="left:194.50px;top:90.24px;font-size:12px;color:#ffff00;">S11</div><div class="t" style="left:1058.50px;top:481.44px;font-size:12px;color:#ff0000;">S22</div><div class="t" style="left:1058.00px;top:90.24px;font-size:12px;color:#0000ff;">S12</div><div class="t" style="right:819.50px;top:103.29px;font-size:9.7px;color:#fff;font-weight:normal;">10</div><div class="t" style="right:819.50px;top:129.52px;font-size:9.7px;color:#fff;font-weight:normal;">0</div><div class="t" style="right:819.50px;top:155.75px;font-size:9.7px;color:#fff;font-weight:normal;">-10</div><div class="t" style="right:819.50px;top:181.98px;font-size:9.7px;color:#fff;font-weight:normal;">-20</div><div class="t" style="right:819.50px;top:208.21px;font-size:9.7px;color:#fff;font-weight:normal;">-30</div><div class="t" style="right:819.50px;top:234.44px;font-size:9.7px;color:#fff;font-weight:normal;">-40</div><div class="t" style="right:819.50px;top:260.67px;font-size:9.7px;color:#fff;font-weight:normal;">-50</div><div class="t" style="right:819.50px;top:286.90px;font-size:9.7px;color:#fff;font-weight:normal;">-60</div><div class="t" style="right:819.50px;top:313.14px;font-size:9.7px;color:#fff;font-weight:normal;">-70</div><div class="t" style="right:819.50px;top:339.37px;font-size:9.7px;color:#fff;font-weight:normal;">-80</div><div class="t" style="right:819.50px;top:365.60px;font-size:9.7px;color:#fff;font-weight:normal;">-90</div><div class="t" style="right:819.50px;top:391.83px;font-size:9.7px;color:#fff;font-weight:normal;">-100</div><div class="t" style="right:819.50px;top:418.06px;font-size:9.7px;color:#fff;font-weight:normal;">-110</div><div class="t" style="right:819.50px;top:444.29px;font-size:9.7px;color:#fff;font-weight:normal;">-120</div><div class="t" style="left:1876.00px;top:129.52px;font-size:9.7px;color:#fff;">0</div><div class="t" style="left:1876.00px;top:208.21px;font-size:9.7px;color:#fff;">-30</div><div class="t" style="left:1876.00px;top:286.90px;font-size:9.7px;color:#fff;">-60</div><div class="t" style="left:1876.00px;top:365.60px;font-size:9.7px;color:#fff;">-90</div><div class="t" style="left:1876.00px;top:444.29px;font-size:9.7px;color:#fff;">-120</div><div class="t" style="left:670.03px;width:1000px;text-align:center;top:455.79px;font-size:9.7px;color:#fff;">500M</div><div class="t" style="left:733.61px;width:1000px;text-align:center;top:455.79px;font-size:9.7px;color:#fff;">1.0G</div><div class="t" style="left:797.20px;width:1000px;text-align:center;top:455.79px;font-size:9.7px;color:#fff;">1.5G</div><div class="t" style="left:860.79px;width:1000px;text-align:center;top:455.79px;font-size:9.7px;color:#fff;">2.0G</div><div class="t" style="left:924.38px;width:1000px;text-align:center;top:455.79px;font-size:9.7px;color:#fff;">2.5G</div><div class="t" style="left:987.97px;width:1000px;text-align:center;top:455.79px;font-size:9.7px;color:#fff;">3.0G</div><div class="t" style="left:1051.56px;width:1000px;text-align:center;top:455.79px;font-size:9.7px;color:#fff;">3.5G</div><div class="t" style="left:1115.15px;width:1000px;text-align:center;top:455.79px;font-size:9.7px;color:#fff;">4.0G</div><div class="t" style="left:1178.73px;width:1000px;text-align:center;top:455.79px;font-size:9.7px;color:#fff;">4.5G</div><div class="t" style="left:1242.32px;width:1000px;text-align:center;top:455.79px;font-size:9.7px;color:#fff;">5.0G</div><div class="t" style="left:1305.91px;width:1000px;text-align:center;top:455.79px;font-size:9.7px;color:#fff;">5.5G</div><div class="t" style="left:1369.50px;width:1000px;text-align:center;top:455.79px;font-size:9.7px;color:#fff;">6.0G</div><div class="t" style="left:989.50px;width:1000px;text-align:center;top:465.14px;font-size:10px;color:#fff;">Frequency</div><div class="t" style="left:564.5px;top:272.5px;width:1000px;text-align:center;font-size:10px;color:#fff;transform:rotate(-90deg);transform-origin:500px 6px;line-height:12px">Magnitude</div><div class="t" style="left:1412px;top:272.5px;width:1000px;text-align:center;font-size:10px;color:#fff;transform:rotate(-90deg);transform-origin:500px 6px;line-height:12px">Magnitude</div><div class="t" style="left:194.50px;top:481.24px;font-size:12px;color:#00ff00;">S21</div><div class="t" style="right:1683.50px;top:494.29px;font-size:9.7px;color:#fff;font-weight:normal;">10</div><div class="t" style="right:1683.50px;top:520.44px;font-size:9.7px;color:#fff;font-weight:normal;">0</div><div class="t" style="right:1683.50px;top:546.60px;font-size:9.7px;color:#fff;font-weight:normal;">-10</div><div class="t" style="right:1683.50px;top:572.75px;font-size:9.7px;color:#fff;font-weight:normal;">-20</div><div class="t" style="right:1683.50px;top:598.90px;font-size:9.7px;color:#fff;font-weight:normal;">-30</div><div class="t" style="right:1683.50px;top:625.06px;font-size:9.7px;color:#fff;font-weight:normal;">-40</div><div class="t" style="right:1683.50px;top:651.21px;font-size:9.7px;color:#fff;font-weight:normal;">-50</div><div class="t" style="right:1683.50px;top:677.37px;font-size:9.7px;color:#fff;font-weight:normal;">-60</div><div class="t" style="right:1683.50px;top:703.52px;font-size:9.7px;color:#fff;font-weight:normal;">-70</div><div class="t" style="right:1683.50px;top:729.67px;font-size:9.7px;color:#fff;font-weight:normal;">-80</div><div class="t" style="right:1683.50px;top:755.83px;font-size:9.7px;color:#fff;font-weight:normal;">-90</div><div class="t" style="right:1683.50px;top:781.98px;font-size:9.7px;color:#fff;font-weight:normal;">-100</div><div class="t" style="right:1683.50px;top:808.14px;font-size:9.7px;color:#fff;font-weight:normal;">-110</div><div class="t" style="right:1683.50px;top:834.29px;font-size:9.7px;color:#fff;font-weight:normal;">-120</div><div class="t" style="left:1013.00px;top:520.44px;font-size:9.7px;color:#fff;">0</div><div class="t" style="left:1013.00px;top:598.90px;font-size:9.7px;color:#fff;">-30</div><div class="t" style="left:1013.00px;top:677.37px;font-size:9.7px;color:#fff;">-60</div><div class="t" style="left:1013.00px;top:755.83px;font-size:9.7px;color:#fff;">-90</div><div class="t" style="left:1013.00px;top:834.29px;font-size:9.7px;color:#fff;">-120</div><div class="t" style="left:-193.89px;width:1000px;text-align:center;top:845.79px;font-size:9.7px;color:#fff;">500M</div><div class="t" style="left:-130.22px;width:1000px;text-align:center;top:845.79px;font-size:9.7px;color:#fff;">1.0G</div><div class="t" style="left:-66.55px;width:1000px;text-align:center;top:845.79px;font-size:9.7px;color:#fff;">1.5G</div><div class="t" style="left:-2.88px;width:1000px;text-align:center;top:845.79px;font-size:9.7px;color:#fff;">2.0G</div><div class="t" style="left:60.80px;width:1000px;text-align:center;top:845.79px;font-size:9.7px;color:#fff;">2.5G</div><div class="t" style="left:124.47px;width:1000px;text-align:center;top:845.79px;font-size:9.7px;color:#fff;">3.0G</div><div class="t" style="left:188.14px;width:1000px;text-align:center;top:845.79px;font-size:9.7px;color:#fff;">3.5G</div><div class="t" style="left:251.81px;width:1000px;text-align:center;top:845.79px;font-size:9.7px;color:#fff;">4.0G</div><div class="t" style="left:315.48px;width:1000px;text-align:center;top:845.79px;font-size:9.7px;color:#fff;">4.5G</div><div class="t" style="left:379.16px;width:1000px;text-align:center;top:845.79px;font-size:9.7px;color:#fff;">5.0G</div><div class="t" style="left:442.83px;width:1000px;text-align:center;top:845.79px;font-size:9.7px;color:#fff;">5.5G</div><div class="t" style="left:506.50px;width:1000px;text-align:center;top:845.79px;font-size:9.7px;color:#fff;">6.0G</div><div class="t" style="left:126.00px;width:1000px;text-align:center;top:855.13px;font-size:10px;color:#fff;">Frequency</div><div class="t" style="left:-299.5px;top:663.0px;width:1000px;text-align:center;font-size:10px;color:#fff;transform:rotate(-90deg);transform-origin:500px 6px;line-height:12px">Magnitude</div><div class="t" style="left:549px;top:663.0px;width:1000px;text-align:center;font-size:10px;color:#fff;transform:rotate(-90deg);transform-origin:500px 6px;line-height:12px">Magnitude</div>
</body></html>
